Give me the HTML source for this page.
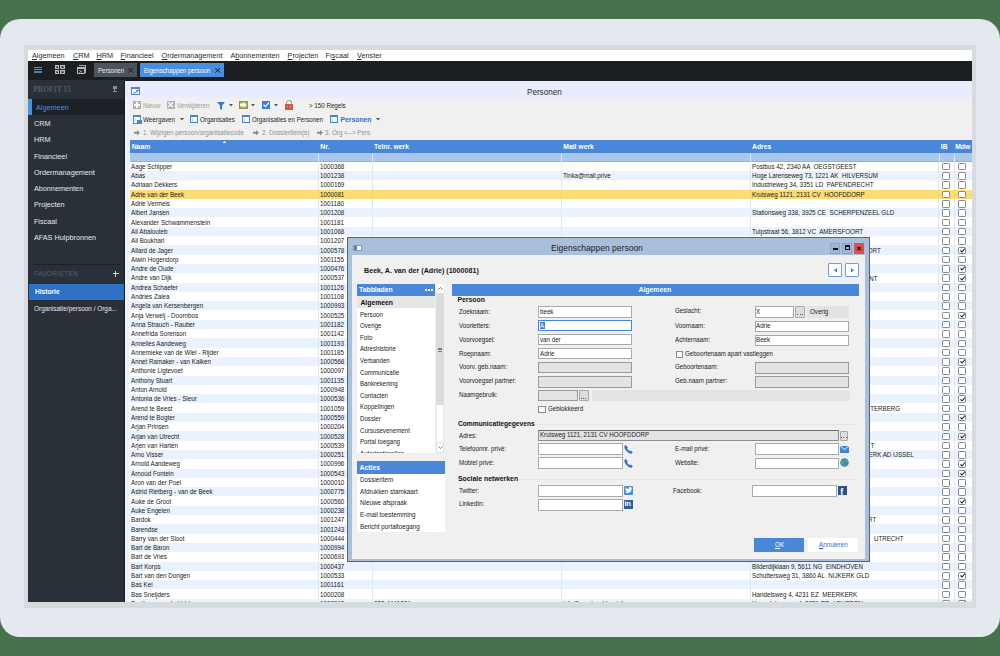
<!DOCTYPE html><html><head><meta charset="utf-8"><style>
html,body{margin:0;padding:0}
body{width:1000px;height:656px;position:relative;overflow:hidden;background:#48724e;font-family:"Liberation Sans",sans-serif}
div{position:absolute;box-sizing:border-box}
.t{white-space:pre;line-height:1.117}
</style></head><body><div style="left:0.00px;top:19.00px;width:1000.00px;height:618.00px;background:#e4e8ef;border-radius:20px"></div><div style="left:24.00px;top:45.00px;width:952.00px;height:562.60px;background:#d6dcdd"></div><div style="left:28.00px;top:50.00px;width:944.00px;height:552.00px;background:#f0f0f0"></div><div style="left:28.00px;top:50.00px;width:944.00px;height:11.00px;background:#ffffff"></div><div class="t" style="left:32.00px;top:51.65px;font-size:7.250px;color:#2a2a2a;font-weight:normal;font-family:'Liberation Sans', sans-serif;text-decoration-thickness:0.6px;text-underline-offset:0.8px"><u>A</u>lgemeen</div><div class="t" style="left:73.00px;top:51.65px;font-size:7.250px;color:#2a2a2a;font-weight:normal;font-family:'Liberation Sans', sans-serif;text-decoration-thickness:0.6px;text-underline-offset:0.8px"><u>C</u>RM</div><div class="t" style="left:96.40px;top:51.65px;font-size:7.250px;color:#2a2a2a;font-weight:normal;font-family:'Liberation Sans', sans-serif;text-decoration-thickness:0.6px;text-underline-offset:0.8px"><u>H</u>RM</div><div class="t" style="left:120.60px;top:51.65px;font-size:7.250px;color:#2a2a2a;font-weight:normal;font-family:'Liberation Sans', sans-serif;text-decoration-thickness:0.6px;text-underline-offset:0.8px"><u>F</u>inancieel</div><div class="t" style="left:161.60px;top:51.65px;font-size:7.250px;color:#2a2a2a;font-weight:normal;font-family:'Liberation Sans', sans-serif;text-decoration-thickness:0.6px;text-underline-offset:0.8px"><u>O</u>rdermanagement</div><div class="t" style="left:230.40px;top:51.65px;font-size:7.250px;color:#2a2a2a;font-weight:normal;font-family:'Liberation Sans', sans-serif;text-decoration-thickness:0.6px;text-underline-offset:0.8px">A<u>b</u>onnementen</div><div class="t" style="left:287.60px;top:51.65px;font-size:7.250px;color:#2a2a2a;font-weight:normal;font-family:'Liberation Sans', sans-serif;text-decoration-thickness:0.6px;text-underline-offset:0.8px"><u>P</u>rojecten</div><div class="t" style="left:325.60px;top:51.65px;font-size:7.250px;color:#2a2a2a;font-weight:normal;font-family:'Liberation Sans', sans-serif;text-decoration-thickness:0.6px;text-underline-offset:0.8px">Fi<u>s</u>caal</div><div class="t" style="left:357.00px;top:51.65px;font-size:7.250px;color:#2a2a2a;font-weight:normal;font-family:'Liberation Sans', sans-serif;text-decoration-thickness:0.6px;text-underline-offset:0.8px"><u>V</u>enster</div><div style="left:28.00px;top:61.00px;width:944.00px;height:19.60px;background:#1c1f22"></div><div style="left:34.00px;top:66.80px;width:8.40px;height:1.10px;background:#4a90e2"></div><div style="left:34.00px;top:69.10px;width:8.40px;height:1.20px;background:#4a90e2"></div><div style="left:34.00px;top:71.20px;width:8.40px;height:1.90px;background:#3f7fcf"></div><div style="left:55.00px;top:65.00px;width:4.30px;height:4.30px;border:1px solid #b9bcc0;background:#6a6d71"></div><div style="left:56.50px;top:66.50px;width:1.30px;height:1.30px;background:#101214"></div><div style="left:55.00px;top:70.20px;width:4.30px;height:4.30px;border:1px solid #b9bcc0;background:#6a6d71"></div><div style="left:56.50px;top:71.70px;width:1.30px;height:1.30px;background:#101214"></div><div style="left:60.30px;top:65.00px;width:4.30px;height:4.30px;border:1px solid #b9bcc0;background:#6a6d71"></div><div style="left:61.80px;top:66.50px;width:1.30px;height:1.30px;background:#101214"></div><div style="left:60.30px;top:70.20px;width:4.30px;height:4.30px;border:1px solid #b9bcc0;background:#6a6d71"></div><div style="left:61.80px;top:71.70px;width:1.30px;height:1.30px;background:#101214"></div><div style="left:78.80px;top:65.00px;width:7.50px;height:7.50px;border-top:1.1px solid #a9acb0;border-right:1.1px solid #a9acb0"></div><div style="left:76.80px;top:66.60px;width:8.50px;height:7.80px;border:1.1px solid #b5b8bc;border-top:2px solid #b5b8bc;background:#1c1f22"></div><svg style="position:absolute;left:79.3px;top:69.5px" width="3.6" height="3" viewBox="0 0 3.6 3"><path d="M0.2 0.2L3.4 2.8M3.4 0.2L0.2 2.8" stroke="#b5b8bc" stroke-width="0.8"/></svg><div style="left:93.90px;top:63.10px;width:43.20px;height:14.00px;background:#4d545c"></div><div class="t" style="left:97.80px;top:67.51px;font-size:7.137px;color:#e8eaec;font-weight:normal;font-family:'Liberation Sans', sans-serif;transform:scaleX(0.8547);transform-origin:0 0;">Personen</div><svg style="position:absolute;left:128.4px;top:68.2px" width="5.4" height="4.8" viewBox="0 0 5.4 4.8"><path d="M0.3 0.2L5.1 4.6M5.1 0.2L0.3 4.6" stroke="#151719" stroke-width="1"/></svg><div style="left:140.00px;top:63.40px;width:84.00px;height:13.60px;background:#4a8edf"></div><div class="t" style="left:144.40px;top:67.48px;font-size:7.184px;color:#ffffff;font-weight:normal;font-family:'Liberation Sans', sans-serif;transform:scaleX(0.8547);transform-origin:0 0;">Eigenschappen persoon</div><svg style="position:absolute;left:215px;top:68.2px" width="5.4" height="4.8" viewBox="0 0 5.4 4.8"><path d="M0.3 0.2L5.1 4.6M5.1 0.2L0.3 4.6" stroke="#151719" stroke-width="1"/></svg><div style="left:28.00px;top:80.00px;width:97.00px;height:522.00px;background:#2a3038"></div><div class="t" style="left:33.25px;top:86.20px;font-size:7.530px;color:#575d64;font-weight:bold;font-family:'Liberation Serif', serif;letter-spacing:0px">PROFIT 15</div><div style="left:114.30px;top:85.50px;width:1.20px;height:6.00px;background:#8a8f94"></div><div style="left:112.80px;top:85.50px;width:4.20px;height:3.60px;background:#8a8f94"></div><div style="left:113.20px;top:91.00px;width:3.40px;height:1.00px;background:#8a8f94"></div><div style="left:28.00px;top:98.60px;width:97.00px;height:16.30px;background:#1d2125"></div><div style="left:28.40px;top:98.60px;width:3.60px;height:16.30px;background:#4a90e2"></div><div class="t" style="left:36.00px;top:103.64px;font-size:7.270px;color:#4a90e2;font-weight:normal;font-family:'Liberation Sans', sans-serif;">Algemeen</div><div class="t" style="left:33.90px;top:120.14px;font-size:7.270px;color:#e6e8ea;font-weight:normal;font-family:'Liberation Sans', sans-serif;">CRM</div><div class="t" style="left:33.90px;top:136.39px;font-size:7.270px;color:#e6e8ea;font-weight:normal;font-family:'Liberation Sans', sans-serif;">HRM</div><div class="t" style="left:33.90px;top:152.64px;font-size:7.270px;color:#e6e8ea;font-weight:normal;font-family:'Liberation Sans', sans-serif;">Financieel</div><div class="t" style="left:33.90px;top:168.89px;font-size:7.270px;color:#e6e8ea;font-weight:normal;font-family:'Liberation Sans', sans-serif;">Ordermanagement</div><div class="t" style="left:33.90px;top:185.14px;font-size:7.270px;color:#e6e8ea;font-weight:normal;font-family:'Liberation Sans', sans-serif;">Abonnementen</div><div class="t" style="left:33.90px;top:201.39px;font-size:7.270px;color:#e6e8ea;font-weight:normal;font-family:'Liberation Sans', sans-serif;">Projecten</div><div class="t" style="left:33.90px;top:217.64px;font-size:7.270px;color:#e6e8ea;font-weight:normal;font-family:'Liberation Sans', sans-serif;">Fiscaal</div><div class="t" style="left:33.90px;top:233.89px;font-size:7.270px;color:#e6e8ea;font-weight:normal;font-family:'Liberation Sans', sans-serif;">AFAS Hulpbronnen</div><div style="left:33.00px;top:264.00px;width:87.00px;height:1.00px;background:#1d2125"></div><div class="t" style="left:33.50px;top:270.19px;font-size:7.722px;color:#596067;font-weight:normal;font-family:'Liberation Sans', sans-serif;transform:scaleX(0.8547);transform-origin:0 0;letter-spacing:0.35px">FAVORIETEN</div><div style="left:112.80px;top:273.10px;width:6.00px;height:1.10px;background:#d0d3d6"></div><div style="left:115.25px;top:270.60px;width:1.10px;height:6.00px;background:#d0d3d6"></div><div style="left:29.00px;top:283.70px;width:94.70px;height:16.10px;background:#2f70c4"></div><div class="t" style="left:35.00px;top:288.20px;font-size:6.600px;color:#ffffff;font-weight:bold;font-family:'Liberation Sans', sans-serif;">Historie</div><div class="t" style="left:33.90px;top:304.69px;font-size:7.535px;color:#e6e8ea;font-weight:normal;font-family:'Liberation Sans', sans-serif;transform:scaleX(0.8547);transform-origin:0 0;">Organisatie/persoon / Orga...</div><div style="left:124.20px;top:80.00px;width:1.00px;height:522.00px;background:#1a1d20"></div><div style="left:125.20px;top:80.60px;width:846.80px;height:521.40px;background:#f0f0f0"></div><div style="left:125.20px;top:80.60px;width:846.80px;height:17.20px;background:#e7edfc"></div><div style="left:125.20px;top:97.80px;width:4.40px;height:504.00px;background:#eef2fb"></div><div style="left:131.00px;top:87.10px;width:8.90px;height:7.80px;border:1px solid #4a86d0;border-top:2px solid #4a86d0;background:#f6f8fc"></div><div style="left:133.00px;top:91.80px;width:5.00px;height:1.20px;background:#3c7ad0;transform:rotate(-20deg)"></div><div style="left:135.50px;top:90.20px;width:3.00px;height:1.20px;background:#e03b3b;transform:rotate(-20deg)"></div><div class="t" style="left:527.10px;top:86.66px;font-size:9.072px;color:#2b2b2b;font-weight:normal;font-family:'Liberation Sans', sans-serif;transform:scaleX(0.8929);transform-origin:0 0;">Personen</div><div style="left:133.10px;top:101.00px;width:7.80px;height:7.90px;background:#b3b3b3"></div><div style="left:136.40px;top:102.30px;width:1.30px;height:5.30px;background:#ffffff"></div><div style="left:134.40px;top:104.30px;width:5.30px;height:1.30px;background:#ffffff"></div><div class="t" style="left:142.90px;top:102.25px;font-size:7.254px;color:#9a9a9a;font-weight:normal;font-family:'Liberation Sans', sans-serif;transform:scaleX(0.8547);transform-origin:0 0;">Nieuw</div><div style="left:167.00px;top:101.00px;width:7.80px;height:7.90px;background:#b3b3b3"></div><svg style="position:absolute;left:168.2px;top:102.2px" width="5.4" height="5.4" viewBox="0 0 5.4 5.4"><path d="M0.3 0.3L5.1 5.1M5.1 0.3L0.3 5.1" stroke="#ffffff" stroke-width="1.3"/></svg><div class="t" style="left:176.70px;top:102.25px;font-size:7.254px;color:#9a9a9a;font-weight:normal;font-family:'Liberation Sans', sans-serif;transform:scaleX(0.8547);transform-origin:0 0;">Verwijderen</div><svg style="position:absolute;left:216.5px;top:101.5px" width="8" height="8" viewBox="0 0 8 8"><path d="M0 0H8L5 3.6V8L3 6.8V3.6Z" fill="#2f78d4"/></svg><svg style="position:absolute;left:228.50px;top:104.40px" width="4" height="3" viewBox="0 0 4 3"><path d="M0 0H4L2 2.4Z" fill="#555"/></svg><div style="left:238.80px;top:101.00px;width:9.30px;height:8.30px;background:#93bf55;border:0.8px solid #a08a50"></div><svg style="position:absolute;left:240.2px;top:102.3px" width="6.8" height="5.8" viewBox="0 0 6.8 5.8"><path d="M0 1.6H3.4V0L6.8 2.9L3.4 5.8V4.2H0Z" fill="#ffffff"/></svg><svg style="position:absolute;left:251.00px;top:104.40px" width="4" height="3" viewBox="0 0 4 3"><path d="M0 0H4L2 2.4Z" fill="#555"/></svg><div style="left:261.70px;top:101.00px;width:8.60px;height:8.20px;background:#3a7fd6"></div><svg style="position:absolute;left:262.8px;top:102.2px" width="6.5" height="5.5" viewBox="0 0 6.5 5.5"><path d="M0.6 2.8L2.5 4.6L6 0.6" stroke="#ffffff" stroke-width="1.3" fill="none"/></svg><svg style="position:absolute;left:273.50px;top:104.40px" width="4" height="3" viewBox="0 0 4 3"><path d="M0 0H4L2 2.4Z" fill="#555"/></svg><div style="left:285.70px;top:100.20px;width:6.40px;height:6.00px;border:1.5px solid #a5a5a5;border-bottom:none;border-radius:3.2px 3.2px 0 0"></div><div style="left:284.60px;top:104.20px;width:8.50px;height:5.60px;background:#d9534a"></div><div style="left:287.20px;top:106.20px;width:0.90px;height:0.90px;background:#f0c0a0"></div><div style="left:289.80px;top:106.20px;width:0.90px;height:0.90px;background:#f0c0a0"></div><div class="t" style="left:309.00px;top:102.25px;font-size:7.254px;color:#1e1e1e;font-weight:normal;font-family:'Liberation Sans', sans-serif;transform:scaleX(0.8547);transform-origin:0 0;">&gt; 150 Regels</div><div style="left:133.10px;top:115.00px;width:8.40px;height:8.50px;border:1px solid #4a86d0;border-top:2px solid #4a86d0;background:#f8fafd"></div><div style="left:134.60px;top:118.00px;width:1.40px;height:4.20px;background:#c9d9ee"></div><div style="left:137.30px;top:119.80px;width:4.60px;height:3.90px;background:#4a86d0"></div><div class="t" style="left:142.90px;top:115.98px;font-size:7.371px;color:#1e1e1e;font-weight:normal;font-family:'Liberation Sans', sans-serif;transform:scaleX(0.8547);transform-origin:0 0;">Weergaven</div><svg style="position:absolute;left:180.00px;top:118.00px" width="4" height="3" viewBox="0 0 4 3"><path d="M0 0H4L2 2.4Z" fill="#555"/></svg><div style="left:190.00px;top:114.80px;width:8.40px;height:8.50px;border:1px solid #4a86d0;border-top:2px solid #4a86d0;background:#f8fafd"></div><div style="left:191.50px;top:117.80px;width:1.40px;height:4.20px;background:#c9d9ee"></div><div class="t" style="left:200.00px;top:116.05px;font-size:7.254px;color:#1e1e1e;font-weight:normal;font-family:'Liberation Sans', sans-serif;transform:scaleX(0.8547);transform-origin:0 0;">Organisaties</div><div style="left:242.00px;top:114.80px;width:8.40px;height:8.50px;border:1px solid #4a86d0;border-top:2px solid #4a86d0;background:#f8fafd"></div><div style="left:243.50px;top:117.80px;width:1.40px;height:4.20px;background:#c9d9ee"></div><div class="t" style="left:252.00px;top:116.08px;font-size:7.184px;color:#1e1e1e;font-weight:normal;font-family:'Liberation Sans', sans-serif;transform:scaleX(0.8547);transform-origin:0 0;">Organisaties en Personen</div><div style="left:330.00px;top:114.80px;width:8.40px;height:8.50px;border:1px solid #4a86d0;border-top:2px solid #4a86d0;background:#f8fafd"></div><div style="left:331.50px;top:117.80px;width:1.40px;height:4.20px;background:#c9d9ee"></div><div class="t" style="left:340.50px;top:115.89px;font-size:6.800px;color:#2f6fc4;font-weight:bold;font-family:'Liberation Sans', sans-serif;">Personen</div><svg style="position:absolute;left:375.50px;top:118.00px" width="4" height="3" viewBox="0 0 4 3"><path d="M0 0H4L2 2.4Z" fill="#555"/></svg><svg style="position:absolute;left:134.00px;top:130.10px" width="6" height="5.6" viewBox="0 0 6 5.6"><path d="M0 1.8H3V0L6 2.8L3 5.6V3.8H0Z" fill="#8c8c8c"/></svg><div class="t" style="left:143.40px;top:129.01px;font-size:7.324px;color:#8e8e8e;font-weight:normal;font-family:'Liberation Sans', sans-serif;transform:scaleX(0.8547);transform-origin:0 0;">1. Wijzigen persoon/organisatiecode</div><svg style="position:absolute;left:252.60px;top:130.10px" width="6" height="5.6" viewBox="0 0 6 5.6"><path d="M0 1.8H3V0L6 2.8L3 5.6V3.8H0Z" fill="#8c8c8c"/></svg><div class="t" style="left:261.70px;top:129.01px;font-size:7.324px;color:#8e8e8e;font-weight:normal;font-family:'Liberation Sans', sans-serif;transform:scaleX(0.8547);transform-origin:0 0;">2. Dossieritem(s)</div><svg style="position:absolute;left:316.80px;top:130.10px" width="6" height="5.6" viewBox="0 0 6 5.6"><path d="M0 1.8H3V0L6 2.8L3 5.6V3.8H0Z" fill="#8c8c8c"/></svg><div class="t" style="left:325.40px;top:129.01px;font-size:7.324px;color:#8e8e8e;font-weight:normal;font-family:'Liberation Sans', sans-serif;transform:scaleX(0.8547);transform-origin:0 0;">3. Org &lt;--&gt; Pers</div><div style="left:129.60px;top:140.00px;width:842.50px;height:12.80px;background:#4a87d8"></div><div style="left:129.60px;top:152.80px;width:842.50px;height:8.90px;background:#a9c6ec;border-bottom:1px solid #8fb2e0"></div><div class="t" style="left:131.70px;top:142.79px;font-size:6.800px;color:#ffffff;font-weight:bold;font-family:'Liberation Sans', sans-serif;">Naam</div><div class="t" style="left:320.30px;top:142.79px;font-size:6.800px;color:#ffffff;font-weight:bold;font-family:'Liberation Sans', sans-serif;">Nr.</div><div class="t" style="left:374.00px;top:142.79px;font-size:6.800px;color:#ffffff;font-weight:bold;font-family:'Liberation Sans', sans-serif;">Telnr. werk</div><div class="t" style="left:563.25px;top:142.79px;font-size:6.800px;color:#ffffff;font-weight:bold;font-family:'Liberation Sans', sans-serif;">Mail werk</div><div class="t" style="left:752.00px;top:142.79px;font-size:6.800px;color:#ffffff;font-weight:bold;font-family:'Liberation Sans', sans-serif;">Adres</div><div class="t" style="left:940.80px;top:142.79px;font-size:6.800px;color:#ffffff;font-weight:bold;font-family:'Liberation Sans', sans-serif;">IB</div><div class="t" style="left:955.20px;top:142.79px;font-size:6.800px;color:#ffffff;font-weight:bold;font-family:'Liberation Sans', sans-serif;">Mdw</div><svg style="position:absolute;left:221.5px;top:140.6px" width="5" height="2.6" viewBox="0 0 5 2.6"><path d="M0 2.6H5L2.5 0Z" fill="#ffffff"/></svg><div style="left:318.40px;top:153.50px;width:1.00px;height:8.00px;background:#d8e6f8"></div><div style="left:372.20px;top:153.50px;width:1.00px;height:8.00px;background:#d8e6f8"></div><div style="left:561.00px;top:153.50px;width:1.00px;height:8.00px;background:#d8e6f8"></div><div style="left:750.00px;top:153.50px;width:1.00px;height:8.00px;background:#d8e6f8"></div><div style="left:938.50px;top:153.50px;width:1.00px;height:8.00px;background:#d8e6f8"></div><div style="left:953.60px;top:153.50px;width:1.00px;height:8.00px;background:#d8e6f8"></div><div style="left:129.6px;top:161.7px;width:842.50px;height:440.00px;overflow:hidden"><div style="left:0.00px;top:0.00px;width:842.50px;height:9.60px;background:#ffffff"></div><div style="left:188.80px;top:0.00px;width:1.00px;height:9.60px;background:#dce9f7"></div><div style="left:242.60px;top:0.00px;width:1.00px;height:9.60px;background:#dce9f7"></div><div style="left:431.40px;top:0.00px;width:1.00px;height:9.60px;background:#dce9f7"></div><div style="left:620.40px;top:0.00px;width:1.00px;height:9.60px;background:#dce9f7"></div><div style="left:808.90px;top:0.00px;width:1.00px;height:9.60px;background:#dce9f7"></div><div style="left:824.00px;top:0.00px;width:1.00px;height:9.60px;background:#dce9f7"></div><div class="t" style="left:1.60px;top:1.21px;font-size:7.500px;color:#1a1a1a;font-weight:normal;font-family:'Liberation Sans', sans-serif;transform:scaleX(0.8333);transform-origin:0 0;">Aage Schipper</div><div class="t" style="left:190.90px;top:1.21px;font-size:7.500px;color:#1a1a1a;font-weight:normal;font-family:'Liberation Sans', sans-serif;transform:scaleX(0.8333);transform-origin:0 0;">1000368</div><div class="t" style="left:622.40px;top:1.21px;font-size:7.500px;color:#1a1a1a;font-weight:normal;font-family:'Liberation Sans', sans-serif;transform:scaleX(0.8333);transform-origin:0 0;">Postbus 42, 2340 AA  OEGSTGEEST</div><div style="left:812.30px;top:1.20px;width:7.80px;height:7.50px;border:1px solid #8a8a8a;border-radius:1.2px;background:#ffffff"></div><div style="left:828.90px;top:1.20px;width:7.80px;height:7.50px;border:1px solid #8a8a8a;border-radius:1.2px;background:#ffffff"></div><div style="left:0.00px;top:9.30px;width:842.50px;height:9.60px;background:#eaf3fd"></div><div style="left:188.80px;top:9.30px;width:1.00px;height:9.60px;background:#dce9f7"></div><div style="left:242.60px;top:9.30px;width:1.00px;height:9.60px;background:#dce9f7"></div><div style="left:431.40px;top:9.30px;width:1.00px;height:9.60px;background:#dce9f7"></div><div style="left:620.40px;top:9.30px;width:1.00px;height:9.60px;background:#dce9f7"></div><div style="left:808.90px;top:9.30px;width:1.00px;height:9.60px;background:#dce9f7"></div><div style="left:824.00px;top:9.30px;width:1.00px;height:9.60px;background:#dce9f7"></div><div class="t" style="left:1.60px;top:10.51px;font-size:7.500px;color:#1a1a1a;font-weight:normal;font-family:'Liberation Sans', sans-serif;transform:scaleX(0.8333);transform-origin:0 0;">Abas</div><div class="t" style="left:190.90px;top:10.51px;font-size:7.500px;color:#1a1a1a;font-weight:normal;font-family:'Liberation Sans', sans-serif;transform:scaleX(0.8333);transform-origin:0 0;">1001238</div><div class="t" style="left:622.40px;top:10.51px;font-size:7.500px;color:#1a1a1a;font-weight:normal;font-family:'Liberation Sans', sans-serif;transform:scaleX(0.8333);transform-origin:0 0;">Hoge Larenseweg 73, 1221 AK  HILVERSUM</div><div class="t" style="left:433.50px;top:10.55px;font-size:7.440px;color:#1a1a1a;font-weight:normal;font-family:'Liberation Sans', sans-serif;transform:scaleX(0.8333);transform-origin:0 0;">Tinka@mail.prive</div><div style="left:812.30px;top:10.50px;width:7.80px;height:7.50px;border:1px solid #8a8a8a;border-radius:1.2px;background:#ffffff"></div><div style="left:828.90px;top:10.50px;width:7.80px;height:7.50px;border:1px solid #8a8a8a;border-radius:1.2px;background:#ffffff"></div><div style="left:0.00px;top:18.60px;width:842.50px;height:9.60px;background:#ffffff"></div><div style="left:188.80px;top:18.60px;width:1.00px;height:9.60px;background:#dce9f7"></div><div style="left:242.60px;top:18.60px;width:1.00px;height:9.60px;background:#dce9f7"></div><div style="left:431.40px;top:18.60px;width:1.00px;height:9.60px;background:#dce9f7"></div><div style="left:620.40px;top:18.60px;width:1.00px;height:9.60px;background:#dce9f7"></div><div style="left:808.90px;top:18.60px;width:1.00px;height:9.60px;background:#dce9f7"></div><div style="left:824.00px;top:18.60px;width:1.00px;height:9.60px;background:#dce9f7"></div><div class="t" style="left:1.60px;top:19.81px;font-size:7.500px;color:#1a1a1a;font-weight:normal;font-family:'Liberation Sans', sans-serif;transform:scaleX(0.8333);transform-origin:0 0;">Adriaan Dekkers</div><div class="t" style="left:190.90px;top:19.81px;font-size:7.500px;color:#1a1a1a;font-weight:normal;font-family:'Liberation Sans', sans-serif;transform:scaleX(0.8333);transform-origin:0 0;">1000169</div><div class="t" style="left:622.40px;top:19.81px;font-size:7.500px;color:#1a1a1a;font-weight:normal;font-family:'Liberation Sans', sans-serif;transform:scaleX(0.8333);transform-origin:0 0;">Industrieweg 34, 3351 LD  PAPENDRECHT</div><div style="left:812.30px;top:19.80px;width:7.80px;height:7.50px;border:1px solid #8a8a8a;border-radius:1.2px;background:#ffffff"></div><div style="left:828.90px;top:19.80px;width:7.80px;height:7.50px;border:1px solid #8a8a8a;border-radius:1.2px;background:#ffffff"></div><div style="left:0.00px;top:27.90px;width:842.50px;height:9.60px;background:#fddc76"></div><div style="left:188.80px;top:27.90px;width:1.00px;height:9.60px;background:#f3d27a"></div><div style="left:242.60px;top:27.90px;width:1.00px;height:9.60px;background:#f3d27a"></div><div style="left:431.40px;top:27.90px;width:1.00px;height:9.60px;background:#f3d27a"></div><div style="left:620.40px;top:27.90px;width:1.00px;height:9.60px;background:#f3d27a"></div><div style="left:808.90px;top:27.90px;width:1.00px;height:9.60px;background:#f3d27a"></div><div style="left:824.00px;top:27.90px;width:1.00px;height:9.60px;background:#f3d27a"></div><div class="t" style="left:1.60px;top:29.11px;font-size:7.500px;color:#1a1a1a;font-weight:normal;font-family:'Liberation Sans', sans-serif;transform:scaleX(0.8333);transform-origin:0 0;">Adrie van der Beek</div><div class="t" style="left:190.90px;top:29.11px;font-size:7.500px;color:#1a1a1a;font-weight:normal;font-family:'Liberation Sans', sans-serif;transform:scaleX(0.8333);transform-origin:0 0;">1000081</div><div class="t" style="left:622.40px;top:29.11px;font-size:7.500px;color:#1a1a1a;font-weight:normal;font-family:'Liberation Sans', sans-serif;transform:scaleX(0.8333);transform-origin:0 0;">Kruisweg 1121, 2131 CV  HOOFDDORP</div><div style="left:812.30px;top:29.10px;width:7.80px;height:7.50px;border:1px solid #8a8a8a;border-radius:1.2px;background:#ffffff"></div><div style="left:828.90px;top:29.10px;width:7.80px;height:7.50px;border:1px solid #8a8a8a;border-radius:1.2px;background:#ffffff"></div><div style="left:0.00px;top:37.20px;width:842.50px;height:9.60px;background:#ffffff"></div><div style="left:188.80px;top:37.20px;width:1.00px;height:9.60px;background:#dce9f7"></div><div style="left:242.60px;top:37.20px;width:1.00px;height:9.60px;background:#dce9f7"></div><div style="left:431.40px;top:37.20px;width:1.00px;height:9.60px;background:#dce9f7"></div><div style="left:620.40px;top:37.20px;width:1.00px;height:9.60px;background:#dce9f7"></div><div style="left:808.90px;top:37.20px;width:1.00px;height:9.60px;background:#dce9f7"></div><div style="left:824.00px;top:37.20px;width:1.00px;height:9.60px;background:#dce9f7"></div><div class="t" style="left:1.60px;top:38.41px;font-size:7.500px;color:#1a1a1a;font-weight:normal;font-family:'Liberation Sans', sans-serif;transform:scaleX(0.8333);transform-origin:0 0;">Adrie Vermeis</div><div class="t" style="left:190.90px;top:38.41px;font-size:7.500px;color:#1a1a1a;font-weight:normal;font-family:'Liberation Sans', sans-serif;transform:scaleX(0.8333);transform-origin:0 0;">1001180</div><div style="left:812.30px;top:38.40px;width:7.80px;height:7.50px;border:1px solid #8a8a8a;border-radius:1.2px;background:#ffffff"></div><div style="left:828.90px;top:38.40px;width:7.80px;height:7.50px;border:1px solid #8a8a8a;border-radius:1.2px;background:#ffffff"></div><div style="left:0.00px;top:46.50px;width:842.50px;height:9.60px;background:#eaf3fd"></div><div style="left:188.80px;top:46.50px;width:1.00px;height:9.60px;background:#dce9f7"></div><div style="left:242.60px;top:46.50px;width:1.00px;height:9.60px;background:#dce9f7"></div><div style="left:431.40px;top:46.50px;width:1.00px;height:9.60px;background:#dce9f7"></div><div style="left:620.40px;top:46.50px;width:1.00px;height:9.60px;background:#dce9f7"></div><div style="left:808.90px;top:46.50px;width:1.00px;height:9.60px;background:#dce9f7"></div><div style="left:824.00px;top:46.50px;width:1.00px;height:9.60px;background:#dce9f7"></div><div class="t" style="left:1.60px;top:47.71px;font-size:7.500px;color:#1a1a1a;font-weight:normal;font-family:'Liberation Sans', sans-serif;transform:scaleX(0.8333);transform-origin:0 0;">Albert Jansen</div><div class="t" style="left:190.90px;top:47.71px;font-size:7.500px;color:#1a1a1a;font-weight:normal;font-family:'Liberation Sans', sans-serif;transform:scaleX(0.8333);transform-origin:0 0;">1001208</div><div class="t" style="left:622.40px;top:47.71px;font-size:7.500px;color:#1a1a1a;font-weight:normal;font-family:'Liberation Sans', sans-serif;transform:scaleX(0.8333);transform-origin:0 0;">Stationsweg 338, 3925 CE  SCHERPENZEEL GLD</div><div style="left:812.30px;top:47.70px;width:7.80px;height:7.50px;border:1px solid #8a8a8a;border-radius:1.2px;background:#ffffff"></div><div style="left:828.90px;top:47.70px;width:7.80px;height:7.50px;border:1px solid #8a8a8a;border-radius:1.2px;background:#ffffff"></div><div style="left:0.00px;top:55.80px;width:842.50px;height:9.60px;background:#ffffff"></div><div style="left:188.80px;top:55.80px;width:1.00px;height:9.60px;background:#dce9f7"></div><div style="left:242.60px;top:55.80px;width:1.00px;height:9.60px;background:#dce9f7"></div><div style="left:431.40px;top:55.80px;width:1.00px;height:9.60px;background:#dce9f7"></div><div style="left:620.40px;top:55.80px;width:1.00px;height:9.60px;background:#dce9f7"></div><div style="left:808.90px;top:55.80px;width:1.00px;height:9.60px;background:#dce9f7"></div><div style="left:824.00px;top:55.80px;width:1.00px;height:9.60px;background:#dce9f7"></div><div class="t" style="left:1.60px;top:57.01px;font-size:7.500px;color:#1a1a1a;font-weight:normal;font-family:'Liberation Sans', sans-serif;transform:scaleX(0.8333);transform-origin:0 0;">Alexander Schwammenstein</div><div class="t" style="left:190.90px;top:57.01px;font-size:7.500px;color:#1a1a1a;font-weight:normal;font-family:'Liberation Sans', sans-serif;transform:scaleX(0.8333);transform-origin:0 0;">1001181</div><div style="left:812.30px;top:57.00px;width:7.80px;height:7.50px;border:1px solid #8a8a8a;border-radius:1.2px;background:#ffffff"></div><div style="left:828.90px;top:57.00px;width:7.80px;height:7.50px;border:1px solid #8a8a8a;border-radius:1.2px;background:#ffffff"></div><div style="left:0.00px;top:65.10px;width:842.50px;height:9.60px;background:#eaf3fd"></div><div style="left:188.80px;top:65.10px;width:1.00px;height:9.60px;background:#dce9f7"></div><div style="left:242.60px;top:65.10px;width:1.00px;height:9.60px;background:#dce9f7"></div><div style="left:431.40px;top:65.10px;width:1.00px;height:9.60px;background:#dce9f7"></div><div style="left:620.40px;top:65.10px;width:1.00px;height:9.60px;background:#dce9f7"></div><div style="left:808.90px;top:65.10px;width:1.00px;height:9.60px;background:#dce9f7"></div><div style="left:824.00px;top:65.10px;width:1.00px;height:9.60px;background:#dce9f7"></div><div class="t" style="left:1.60px;top:66.31px;font-size:7.500px;color:#1a1a1a;font-weight:normal;font-family:'Liberation Sans', sans-serif;transform:scaleX(0.8333);transform-origin:0 0;">Ali Abalouteb</div><div class="t" style="left:190.90px;top:66.31px;font-size:7.500px;color:#1a1a1a;font-weight:normal;font-family:'Liberation Sans', sans-serif;transform:scaleX(0.8333);transform-origin:0 0;">1001068</div><div class="t" style="left:622.40px;top:66.31px;font-size:7.500px;color:#1a1a1a;font-weight:normal;font-family:'Liberation Sans', sans-serif;transform:scaleX(0.8333);transform-origin:0 0;">Tulpstraat 56, 3812 VC  AMERSFOORT</div><div style="left:812.30px;top:66.30px;width:7.80px;height:7.50px;border:1px solid #8a8a8a;border-radius:1.2px;background:#ffffff"></div><div style="left:828.90px;top:66.30px;width:7.80px;height:7.50px;border:1px solid #8a8a8a;border-radius:1.2px;background:#ffffff"></div><div style="left:0.00px;top:74.40px;width:842.50px;height:9.60px;background:#ffffff"></div><div style="left:188.80px;top:74.40px;width:1.00px;height:9.60px;background:#dce9f7"></div><div style="left:242.60px;top:74.40px;width:1.00px;height:9.60px;background:#dce9f7"></div><div style="left:431.40px;top:74.40px;width:1.00px;height:9.60px;background:#dce9f7"></div><div style="left:620.40px;top:74.40px;width:1.00px;height:9.60px;background:#dce9f7"></div><div style="left:808.90px;top:74.40px;width:1.00px;height:9.60px;background:#dce9f7"></div><div style="left:824.00px;top:74.40px;width:1.00px;height:9.60px;background:#dce9f7"></div><div class="t" style="left:1.60px;top:75.61px;font-size:7.500px;color:#1a1a1a;font-weight:normal;font-family:'Liberation Sans', sans-serif;transform:scaleX(0.8333);transform-origin:0 0;">Ali Boukhari</div><div class="t" style="left:190.90px;top:75.61px;font-size:7.500px;color:#1a1a1a;font-weight:normal;font-family:'Liberation Sans', sans-serif;transform:scaleX(0.8333);transform-origin:0 0;">1001207</div><div style="left:812.30px;top:75.60px;width:7.80px;height:7.50px;border:1px solid #8a8a8a;border-radius:1.2px;background:#ffffff"></div><div style="left:828.90px;top:75.60px;width:7.80px;height:7.50px;border:1px solid #8a8a8a;border-radius:1.2px;background:#ffffff"></div><div style="left:0.00px;top:83.70px;width:842.50px;height:9.60px;background:#eaf3fd"></div><div style="left:188.80px;top:83.70px;width:1.00px;height:9.60px;background:#dce9f7"></div><div style="left:242.60px;top:83.70px;width:1.00px;height:9.60px;background:#dce9f7"></div><div style="left:431.40px;top:83.70px;width:1.00px;height:9.60px;background:#dce9f7"></div><div style="left:620.40px;top:83.70px;width:1.00px;height:9.60px;background:#dce9f7"></div><div style="left:808.90px;top:83.70px;width:1.00px;height:9.60px;background:#dce9f7"></div><div style="left:824.00px;top:83.70px;width:1.00px;height:9.60px;background:#dce9f7"></div><div class="t" style="left:1.60px;top:84.91px;font-size:7.500px;color:#1a1a1a;font-weight:normal;font-family:'Liberation Sans', sans-serif;transform:scaleX(0.8333);transform-origin:0 0;">Allard de Jager</div><div class="t" style="left:190.90px;top:84.91px;font-size:7.500px;color:#1a1a1a;font-weight:normal;font-family:'Liberation Sans', sans-serif;transform:scaleX(0.8333);transform-origin:0 0;">1000578</div><div style="left:812.30px;top:84.90px;width:7.80px;height:7.50px;border:1px solid #8a8a8a;border-radius:1.2px;background:#ffffff"></div><div style="left:828.90px;top:84.90px;width:7.80px;height:7.50px;border:1px solid #8a8a8a;border-radius:1.2px;background:#ffffff"></div><svg style="position:absolute;left:830.20px;top:86.20px" width="5.4" height="4.8" viewBox="0 0 5.4 4.8"><path d="M0.5 2.4L2 4L5 0.5" stroke="#1a1a1a" stroke-width="1.1" fill="none"/></svg><div style="left:0.00px;top:93.00px;width:842.50px;height:9.60px;background:#ffffff"></div><div style="left:188.80px;top:93.00px;width:1.00px;height:9.60px;background:#dce9f7"></div><div style="left:242.60px;top:93.00px;width:1.00px;height:9.60px;background:#dce9f7"></div><div style="left:431.40px;top:93.00px;width:1.00px;height:9.60px;background:#dce9f7"></div><div style="left:620.40px;top:93.00px;width:1.00px;height:9.60px;background:#dce9f7"></div><div style="left:808.90px;top:93.00px;width:1.00px;height:9.60px;background:#dce9f7"></div><div style="left:824.00px;top:93.00px;width:1.00px;height:9.60px;background:#dce9f7"></div><div class="t" style="left:1.60px;top:94.21px;font-size:7.500px;color:#1a1a1a;font-weight:normal;font-family:'Liberation Sans', sans-serif;transform:scaleX(0.8333);transform-origin:0 0;">Alwin Hogendorp</div><div class="t" style="left:190.90px;top:94.21px;font-size:7.500px;color:#1a1a1a;font-weight:normal;font-family:'Liberation Sans', sans-serif;transform:scaleX(0.8333);transform-origin:0 0;">1001155</div><div style="left:812.30px;top:94.20px;width:7.80px;height:7.50px;border:1px solid #8a8a8a;border-radius:1.2px;background:#ffffff"></div><div style="left:828.90px;top:94.20px;width:7.80px;height:7.50px;border:1px solid #8a8a8a;border-radius:1.2px;background:#ffffff"></div><div style="left:0.00px;top:102.30px;width:842.50px;height:9.60px;background:#eaf3fd"></div><div style="left:188.80px;top:102.30px;width:1.00px;height:9.60px;background:#dce9f7"></div><div style="left:242.60px;top:102.30px;width:1.00px;height:9.60px;background:#dce9f7"></div><div style="left:431.40px;top:102.30px;width:1.00px;height:9.60px;background:#dce9f7"></div><div style="left:620.40px;top:102.30px;width:1.00px;height:9.60px;background:#dce9f7"></div><div style="left:808.90px;top:102.30px;width:1.00px;height:9.60px;background:#dce9f7"></div><div style="left:824.00px;top:102.30px;width:1.00px;height:9.60px;background:#dce9f7"></div><div class="t" style="left:1.60px;top:103.51px;font-size:7.500px;color:#1a1a1a;font-weight:normal;font-family:'Liberation Sans', sans-serif;transform:scaleX(0.8333);transform-origin:0 0;">Andre de Oude</div><div class="t" style="left:190.90px;top:103.51px;font-size:7.500px;color:#1a1a1a;font-weight:normal;font-family:'Liberation Sans', sans-serif;transform:scaleX(0.8333);transform-origin:0 0;">1000476</div><div style="left:812.30px;top:103.50px;width:7.80px;height:7.50px;border:1px solid #8a8a8a;border-radius:1.2px;background:#ffffff"></div><div style="left:828.90px;top:103.50px;width:7.80px;height:7.50px;border:1px solid #8a8a8a;border-radius:1.2px;background:#ffffff"></div><svg style="position:absolute;left:830.20px;top:104.80px" width="5.4" height="4.8" viewBox="0 0 5.4 4.8"><path d="M0.5 2.4L2 4L5 0.5" stroke="#1a1a1a" stroke-width="1.1" fill="none"/></svg><div style="left:0.00px;top:111.60px;width:842.50px;height:9.60px;background:#ffffff"></div><div style="left:188.80px;top:111.60px;width:1.00px;height:9.60px;background:#dce9f7"></div><div style="left:242.60px;top:111.60px;width:1.00px;height:9.60px;background:#dce9f7"></div><div style="left:431.40px;top:111.60px;width:1.00px;height:9.60px;background:#dce9f7"></div><div style="left:620.40px;top:111.60px;width:1.00px;height:9.60px;background:#dce9f7"></div><div style="left:808.90px;top:111.60px;width:1.00px;height:9.60px;background:#dce9f7"></div><div style="left:824.00px;top:111.60px;width:1.00px;height:9.60px;background:#dce9f7"></div><div class="t" style="left:1.60px;top:112.81px;font-size:7.500px;color:#1a1a1a;font-weight:normal;font-family:'Liberation Sans', sans-serif;transform:scaleX(0.8333);transform-origin:0 0;">Andre van Dijk</div><div class="t" style="left:190.90px;top:112.81px;font-size:7.500px;color:#1a1a1a;font-weight:normal;font-family:'Liberation Sans', sans-serif;transform:scaleX(0.8333);transform-origin:0 0;">1000537</div><div style="left:812.30px;top:112.80px;width:7.80px;height:7.50px;border:1px solid #8a8a8a;border-radius:1.2px;background:#ffffff"></div><div style="left:828.90px;top:112.80px;width:7.80px;height:7.50px;border:1px solid #8a8a8a;border-radius:1.2px;background:#ffffff"></div><svg style="position:absolute;left:830.20px;top:114.10px" width="5.4" height="4.8" viewBox="0 0 5.4 4.8"><path d="M0.5 2.4L2 4L5 0.5" stroke="#1a1a1a" stroke-width="1.1" fill="none"/></svg><div style="left:0.00px;top:120.90px;width:842.50px;height:9.60px;background:#eaf3fd"></div><div style="left:188.80px;top:120.90px;width:1.00px;height:9.60px;background:#dce9f7"></div><div style="left:242.60px;top:120.90px;width:1.00px;height:9.60px;background:#dce9f7"></div><div style="left:431.40px;top:120.90px;width:1.00px;height:9.60px;background:#dce9f7"></div><div style="left:620.40px;top:120.90px;width:1.00px;height:9.60px;background:#dce9f7"></div><div style="left:808.90px;top:120.90px;width:1.00px;height:9.60px;background:#dce9f7"></div><div style="left:824.00px;top:120.90px;width:1.00px;height:9.60px;background:#dce9f7"></div><div class="t" style="left:1.60px;top:122.11px;font-size:7.500px;color:#1a1a1a;font-weight:normal;font-family:'Liberation Sans', sans-serif;transform:scaleX(0.8333);transform-origin:0 0;">Andrea Schaefer</div><div class="t" style="left:190.90px;top:122.11px;font-size:7.500px;color:#1a1a1a;font-weight:normal;font-family:'Liberation Sans', sans-serif;transform:scaleX(0.8333);transform-origin:0 0;">1001126</div><div style="left:812.30px;top:122.10px;width:7.80px;height:7.50px;border:1px solid #8a8a8a;border-radius:1.2px;background:#ffffff"></div><div style="left:828.90px;top:122.10px;width:7.80px;height:7.50px;border:1px solid #8a8a8a;border-radius:1.2px;background:#ffffff"></div><div style="left:0.00px;top:130.20px;width:842.50px;height:9.60px;background:#ffffff"></div><div style="left:188.80px;top:130.20px;width:1.00px;height:9.60px;background:#dce9f7"></div><div style="left:242.60px;top:130.20px;width:1.00px;height:9.60px;background:#dce9f7"></div><div style="left:431.40px;top:130.20px;width:1.00px;height:9.60px;background:#dce9f7"></div><div style="left:620.40px;top:130.20px;width:1.00px;height:9.60px;background:#dce9f7"></div><div style="left:808.90px;top:130.20px;width:1.00px;height:9.60px;background:#dce9f7"></div><div style="left:824.00px;top:130.20px;width:1.00px;height:9.60px;background:#dce9f7"></div><div class="t" style="left:1.60px;top:131.41px;font-size:7.500px;color:#1a1a1a;font-weight:normal;font-family:'Liberation Sans', sans-serif;transform:scaleX(0.8333);transform-origin:0 0;">Andries Zalea</div><div class="t" style="left:190.90px;top:131.41px;font-size:7.500px;color:#1a1a1a;font-weight:normal;font-family:'Liberation Sans', sans-serif;transform:scaleX(0.8333);transform-origin:0 0;">1001108</div><div style="left:812.30px;top:131.40px;width:7.80px;height:7.50px;border:1px solid #8a8a8a;border-radius:1.2px;background:#ffffff"></div><div style="left:828.90px;top:131.40px;width:7.80px;height:7.50px;border:1px solid #8a8a8a;border-radius:1.2px;background:#ffffff"></div><div style="left:0.00px;top:139.50px;width:842.50px;height:9.60px;background:#eaf3fd"></div><div style="left:188.80px;top:139.50px;width:1.00px;height:9.60px;background:#dce9f7"></div><div style="left:242.60px;top:139.50px;width:1.00px;height:9.60px;background:#dce9f7"></div><div style="left:431.40px;top:139.50px;width:1.00px;height:9.60px;background:#dce9f7"></div><div style="left:620.40px;top:139.50px;width:1.00px;height:9.60px;background:#dce9f7"></div><div style="left:808.90px;top:139.50px;width:1.00px;height:9.60px;background:#dce9f7"></div><div style="left:824.00px;top:139.50px;width:1.00px;height:9.60px;background:#dce9f7"></div><div class="t" style="left:1.60px;top:140.71px;font-size:7.500px;color:#1a1a1a;font-weight:normal;font-family:'Liberation Sans', sans-serif;transform:scaleX(0.8333);transform-origin:0 0;">Angela van Kersenbergen</div><div class="t" style="left:190.90px;top:140.71px;font-size:7.500px;color:#1a1a1a;font-weight:normal;font-family:'Liberation Sans', sans-serif;transform:scaleX(0.8333);transform-origin:0 0;">1000993</div><div style="left:812.30px;top:140.70px;width:7.80px;height:7.50px;border:1px solid #8a8a8a;border-radius:1.2px;background:#ffffff"></div><div style="left:828.90px;top:140.70px;width:7.80px;height:7.50px;border:1px solid #8a8a8a;border-radius:1.2px;background:#ffffff"></div><div style="left:0.00px;top:148.80px;width:842.50px;height:9.60px;background:#ffffff"></div><div style="left:188.80px;top:148.80px;width:1.00px;height:9.60px;background:#dce9f7"></div><div style="left:242.60px;top:148.80px;width:1.00px;height:9.60px;background:#dce9f7"></div><div style="left:431.40px;top:148.80px;width:1.00px;height:9.60px;background:#dce9f7"></div><div style="left:620.40px;top:148.80px;width:1.00px;height:9.60px;background:#dce9f7"></div><div style="left:808.90px;top:148.80px;width:1.00px;height:9.60px;background:#dce9f7"></div><div style="left:824.00px;top:148.80px;width:1.00px;height:9.60px;background:#dce9f7"></div><div class="t" style="left:1.60px;top:150.01px;font-size:7.500px;color:#1a1a1a;font-weight:normal;font-family:'Liberation Sans', sans-serif;transform:scaleX(0.8333);transform-origin:0 0;">Anja Verweij - Doornbos</div><div class="t" style="left:190.90px;top:150.01px;font-size:7.500px;color:#1a1a1a;font-weight:normal;font-family:'Liberation Sans', sans-serif;transform:scaleX(0.8333);transform-origin:0 0;">1000525</div><div style="left:812.30px;top:150.00px;width:7.80px;height:7.50px;border:1px solid #8a8a8a;border-radius:1.2px;background:#ffffff"></div><div style="left:828.90px;top:150.00px;width:7.80px;height:7.50px;border:1px solid #8a8a8a;border-radius:1.2px;background:#ffffff"></div><svg style="position:absolute;left:830.20px;top:151.30px" width="5.4" height="4.8" viewBox="0 0 5.4 4.8"><path d="M0.5 2.4L2 4L5 0.5" stroke="#1a1a1a" stroke-width="1.1" fill="none"/></svg><div style="left:0.00px;top:158.10px;width:842.50px;height:9.60px;background:#eaf3fd"></div><div style="left:188.80px;top:158.10px;width:1.00px;height:9.60px;background:#dce9f7"></div><div style="left:242.60px;top:158.10px;width:1.00px;height:9.60px;background:#dce9f7"></div><div style="left:431.40px;top:158.10px;width:1.00px;height:9.60px;background:#dce9f7"></div><div style="left:620.40px;top:158.10px;width:1.00px;height:9.60px;background:#dce9f7"></div><div style="left:808.90px;top:158.10px;width:1.00px;height:9.60px;background:#dce9f7"></div><div style="left:824.00px;top:158.10px;width:1.00px;height:9.60px;background:#dce9f7"></div><div class="t" style="left:1.60px;top:159.31px;font-size:7.500px;color:#1a1a1a;font-weight:normal;font-family:'Liberation Sans', sans-serif;transform:scaleX(0.8333);transform-origin:0 0;">Anna Strauch - Rauber</div><div class="t" style="left:190.90px;top:159.31px;font-size:7.500px;color:#1a1a1a;font-weight:normal;font-family:'Liberation Sans', sans-serif;transform:scaleX(0.8333);transform-origin:0 0;">1001182</div><div style="left:812.30px;top:159.30px;width:7.80px;height:7.50px;border:1px solid #8a8a8a;border-radius:1.2px;background:#ffffff"></div><div style="left:828.90px;top:159.30px;width:7.80px;height:7.50px;border:1px solid #8a8a8a;border-radius:1.2px;background:#ffffff"></div><div style="left:0.00px;top:167.40px;width:842.50px;height:9.60px;background:#ffffff"></div><div style="left:188.80px;top:167.40px;width:1.00px;height:9.60px;background:#dce9f7"></div><div style="left:242.60px;top:167.40px;width:1.00px;height:9.60px;background:#dce9f7"></div><div style="left:431.40px;top:167.40px;width:1.00px;height:9.60px;background:#dce9f7"></div><div style="left:620.40px;top:167.40px;width:1.00px;height:9.60px;background:#dce9f7"></div><div style="left:808.90px;top:167.40px;width:1.00px;height:9.60px;background:#dce9f7"></div><div style="left:824.00px;top:167.40px;width:1.00px;height:9.60px;background:#dce9f7"></div><div class="t" style="left:1.60px;top:168.61px;font-size:7.500px;color:#1a1a1a;font-weight:normal;font-family:'Liberation Sans', sans-serif;transform:scaleX(0.8333);transform-origin:0 0;">Annefrida Sorenson</div><div class="t" style="left:190.90px;top:168.61px;font-size:7.500px;color:#1a1a1a;font-weight:normal;font-family:'Liberation Sans', sans-serif;transform:scaleX(0.8333);transform-origin:0 0;">1001142</div><div style="left:812.30px;top:168.60px;width:7.80px;height:7.50px;border:1px solid #8a8a8a;border-radius:1.2px;background:#ffffff"></div><div style="left:828.90px;top:168.60px;width:7.80px;height:7.50px;border:1px solid #8a8a8a;border-radius:1.2px;background:#ffffff"></div><div style="left:0.00px;top:176.70px;width:842.50px;height:9.60px;background:#eaf3fd"></div><div style="left:188.80px;top:176.70px;width:1.00px;height:9.60px;background:#dce9f7"></div><div style="left:242.60px;top:176.70px;width:1.00px;height:9.60px;background:#dce9f7"></div><div style="left:431.40px;top:176.70px;width:1.00px;height:9.60px;background:#dce9f7"></div><div style="left:620.40px;top:176.70px;width:1.00px;height:9.60px;background:#dce9f7"></div><div style="left:808.90px;top:176.70px;width:1.00px;height:9.60px;background:#dce9f7"></div><div style="left:824.00px;top:176.70px;width:1.00px;height:9.60px;background:#dce9f7"></div><div class="t" style="left:1.60px;top:177.91px;font-size:7.500px;color:#1a1a1a;font-weight:normal;font-family:'Liberation Sans', sans-serif;transform:scaleX(0.8333);transform-origin:0 0;">Annelies Aandeweg</div><div class="t" style="left:190.90px;top:177.91px;font-size:7.500px;color:#1a1a1a;font-weight:normal;font-family:'Liberation Sans', sans-serif;transform:scaleX(0.8333);transform-origin:0 0;">1001193</div><div style="left:812.30px;top:177.90px;width:7.80px;height:7.50px;border:1px solid #8a8a8a;border-radius:1.2px;background:#ffffff"></div><div style="left:828.90px;top:177.90px;width:7.80px;height:7.50px;border:1px solid #8a8a8a;border-radius:1.2px;background:#ffffff"></div><div style="left:0.00px;top:186.00px;width:842.50px;height:9.60px;background:#ffffff"></div><div style="left:188.80px;top:186.00px;width:1.00px;height:9.60px;background:#dce9f7"></div><div style="left:242.60px;top:186.00px;width:1.00px;height:9.60px;background:#dce9f7"></div><div style="left:431.40px;top:186.00px;width:1.00px;height:9.60px;background:#dce9f7"></div><div style="left:620.40px;top:186.00px;width:1.00px;height:9.60px;background:#dce9f7"></div><div style="left:808.90px;top:186.00px;width:1.00px;height:9.60px;background:#dce9f7"></div><div style="left:824.00px;top:186.00px;width:1.00px;height:9.60px;background:#dce9f7"></div><div class="t" style="left:1.60px;top:187.21px;font-size:7.500px;color:#1a1a1a;font-weight:normal;font-family:'Liberation Sans', sans-serif;transform:scaleX(0.8333);transform-origin:0 0;">Annemieke van de Wiel - Rijder</div><div class="t" style="left:190.90px;top:187.21px;font-size:7.500px;color:#1a1a1a;font-weight:normal;font-family:'Liberation Sans', sans-serif;transform:scaleX(0.8333);transform-origin:0 0;">1001185</div><div style="left:812.30px;top:187.20px;width:7.80px;height:7.50px;border:1px solid #8a8a8a;border-radius:1.2px;background:#ffffff"></div><div style="left:828.90px;top:187.20px;width:7.80px;height:7.50px;border:1px solid #8a8a8a;border-radius:1.2px;background:#ffffff"></div><div style="left:0.00px;top:195.30px;width:842.50px;height:9.60px;background:#eaf3fd"></div><div style="left:188.80px;top:195.30px;width:1.00px;height:9.60px;background:#dce9f7"></div><div style="left:242.60px;top:195.30px;width:1.00px;height:9.60px;background:#dce9f7"></div><div style="left:431.40px;top:195.30px;width:1.00px;height:9.60px;background:#dce9f7"></div><div style="left:620.40px;top:195.30px;width:1.00px;height:9.60px;background:#dce9f7"></div><div style="left:808.90px;top:195.30px;width:1.00px;height:9.60px;background:#dce9f7"></div><div style="left:824.00px;top:195.30px;width:1.00px;height:9.60px;background:#dce9f7"></div><div class="t" style="left:1.60px;top:196.51px;font-size:7.500px;color:#1a1a1a;font-weight:normal;font-family:'Liberation Sans', sans-serif;transform:scaleX(0.8333);transform-origin:0 0;">Annet Ramaker - van Kalken</div><div class="t" style="left:190.90px;top:196.51px;font-size:7.500px;color:#1a1a1a;font-weight:normal;font-family:'Liberation Sans', sans-serif;transform:scaleX(0.8333);transform-origin:0 0;">1000568</div><div style="left:812.30px;top:196.50px;width:7.80px;height:7.50px;border:1px solid #8a8a8a;border-radius:1.2px;background:#ffffff"></div><div style="left:828.90px;top:196.50px;width:7.80px;height:7.50px;border:1px solid #8a8a8a;border-radius:1.2px;background:#ffffff"></div><svg style="position:absolute;left:830.20px;top:197.80px" width="5.4" height="4.8" viewBox="0 0 5.4 4.8"><path d="M0.5 2.4L2 4L5 0.5" stroke="#1a1a1a" stroke-width="1.1" fill="none"/></svg><div style="left:0.00px;top:204.60px;width:842.50px;height:9.60px;background:#ffffff"></div><div style="left:188.80px;top:204.60px;width:1.00px;height:9.60px;background:#dce9f7"></div><div style="left:242.60px;top:204.60px;width:1.00px;height:9.60px;background:#dce9f7"></div><div style="left:431.40px;top:204.60px;width:1.00px;height:9.60px;background:#dce9f7"></div><div style="left:620.40px;top:204.60px;width:1.00px;height:9.60px;background:#dce9f7"></div><div style="left:808.90px;top:204.60px;width:1.00px;height:9.60px;background:#dce9f7"></div><div style="left:824.00px;top:204.60px;width:1.00px;height:9.60px;background:#dce9f7"></div><div class="t" style="left:1.60px;top:205.81px;font-size:7.500px;color:#1a1a1a;font-weight:normal;font-family:'Liberation Sans', sans-serif;transform:scaleX(0.8333);transform-origin:0 0;">Anthonie Ligtevoet</div><div class="t" style="left:190.90px;top:205.81px;font-size:7.500px;color:#1a1a1a;font-weight:normal;font-family:'Liberation Sans', sans-serif;transform:scaleX(0.8333);transform-origin:0 0;">1000097</div><div style="left:812.30px;top:205.80px;width:7.80px;height:7.50px;border:1px solid #8a8a8a;border-radius:1.2px;background:#ffffff"></div><div style="left:828.90px;top:205.80px;width:7.80px;height:7.50px;border:1px solid #8a8a8a;border-radius:1.2px;background:#ffffff"></div><div style="left:0.00px;top:213.90px;width:842.50px;height:9.60px;background:#eaf3fd"></div><div style="left:188.80px;top:213.90px;width:1.00px;height:9.60px;background:#dce9f7"></div><div style="left:242.60px;top:213.90px;width:1.00px;height:9.60px;background:#dce9f7"></div><div style="left:431.40px;top:213.90px;width:1.00px;height:9.60px;background:#dce9f7"></div><div style="left:620.40px;top:213.90px;width:1.00px;height:9.60px;background:#dce9f7"></div><div style="left:808.90px;top:213.90px;width:1.00px;height:9.60px;background:#dce9f7"></div><div style="left:824.00px;top:213.90px;width:1.00px;height:9.60px;background:#dce9f7"></div><div class="t" style="left:1.60px;top:215.11px;font-size:7.500px;color:#1a1a1a;font-weight:normal;font-family:'Liberation Sans', sans-serif;transform:scaleX(0.8333);transform-origin:0 0;">Anthony Stuart</div><div class="t" style="left:190.90px;top:215.11px;font-size:7.500px;color:#1a1a1a;font-weight:normal;font-family:'Liberation Sans', sans-serif;transform:scaleX(0.8333);transform-origin:0 0;">1001135</div><div style="left:812.30px;top:215.10px;width:7.80px;height:7.50px;border:1px solid #8a8a8a;border-radius:1.2px;background:#ffffff"></div><div style="left:828.90px;top:215.10px;width:7.80px;height:7.50px;border:1px solid #8a8a8a;border-radius:1.2px;background:#ffffff"></div><div style="left:0.00px;top:223.20px;width:842.50px;height:9.60px;background:#ffffff"></div><div style="left:188.80px;top:223.20px;width:1.00px;height:9.60px;background:#dce9f7"></div><div style="left:242.60px;top:223.20px;width:1.00px;height:9.60px;background:#dce9f7"></div><div style="left:431.40px;top:223.20px;width:1.00px;height:9.60px;background:#dce9f7"></div><div style="left:620.40px;top:223.20px;width:1.00px;height:9.60px;background:#dce9f7"></div><div style="left:808.90px;top:223.20px;width:1.00px;height:9.60px;background:#dce9f7"></div><div style="left:824.00px;top:223.20px;width:1.00px;height:9.60px;background:#dce9f7"></div><div class="t" style="left:1.60px;top:224.41px;font-size:7.500px;color:#1a1a1a;font-weight:normal;font-family:'Liberation Sans', sans-serif;transform:scaleX(0.8333);transform-origin:0 0;">Anton Arnold</div><div class="t" style="left:190.90px;top:224.41px;font-size:7.500px;color:#1a1a1a;font-weight:normal;font-family:'Liberation Sans', sans-serif;transform:scaleX(0.8333);transform-origin:0 0;">1000948</div><div style="left:812.30px;top:224.40px;width:7.80px;height:7.50px;border:1px solid #8a8a8a;border-radius:1.2px;background:#ffffff"></div><div style="left:828.90px;top:224.40px;width:7.80px;height:7.50px;border:1px solid #8a8a8a;border-radius:1.2px;background:#ffffff"></div><div style="left:0.00px;top:232.50px;width:842.50px;height:9.60px;background:#eaf3fd"></div><div style="left:188.80px;top:232.50px;width:1.00px;height:9.60px;background:#dce9f7"></div><div style="left:242.60px;top:232.50px;width:1.00px;height:9.60px;background:#dce9f7"></div><div style="left:431.40px;top:232.50px;width:1.00px;height:9.60px;background:#dce9f7"></div><div style="left:620.40px;top:232.50px;width:1.00px;height:9.60px;background:#dce9f7"></div><div style="left:808.90px;top:232.50px;width:1.00px;height:9.60px;background:#dce9f7"></div><div style="left:824.00px;top:232.50px;width:1.00px;height:9.60px;background:#dce9f7"></div><div class="t" style="left:1.60px;top:233.71px;font-size:7.500px;color:#1a1a1a;font-weight:normal;font-family:'Liberation Sans', sans-serif;transform:scaleX(0.8333);transform-origin:0 0;">Antonia de Vries - Sleur</div><div class="t" style="left:190.90px;top:233.71px;font-size:7.500px;color:#1a1a1a;font-weight:normal;font-family:'Liberation Sans', sans-serif;transform:scaleX(0.8333);transform-origin:0 0;">1000536</div><div style="left:812.30px;top:233.70px;width:7.80px;height:7.50px;border:1px solid #8a8a8a;border-radius:1.2px;background:#ffffff"></div><div style="left:828.90px;top:233.70px;width:7.80px;height:7.50px;border:1px solid #8a8a8a;border-radius:1.2px;background:#ffffff"></div><svg style="position:absolute;left:830.20px;top:235.00px" width="5.4" height="4.8" viewBox="0 0 5.4 4.8"><path d="M0.5 2.4L2 4L5 0.5" stroke="#1a1a1a" stroke-width="1.1" fill="none"/></svg><div style="left:0.00px;top:241.80px;width:842.50px;height:9.60px;background:#ffffff"></div><div style="left:188.80px;top:241.80px;width:1.00px;height:9.60px;background:#dce9f7"></div><div style="left:242.60px;top:241.80px;width:1.00px;height:9.60px;background:#dce9f7"></div><div style="left:431.40px;top:241.80px;width:1.00px;height:9.60px;background:#dce9f7"></div><div style="left:620.40px;top:241.80px;width:1.00px;height:9.60px;background:#dce9f7"></div><div style="left:808.90px;top:241.80px;width:1.00px;height:9.60px;background:#dce9f7"></div><div style="left:824.00px;top:241.80px;width:1.00px;height:9.60px;background:#dce9f7"></div><div class="t" style="left:1.60px;top:243.01px;font-size:7.500px;color:#1a1a1a;font-weight:normal;font-family:'Liberation Sans', sans-serif;transform:scaleX(0.8333);transform-origin:0 0;">Arend te Beest</div><div class="t" style="left:190.90px;top:243.01px;font-size:7.500px;color:#1a1a1a;font-weight:normal;font-family:'Liberation Sans', sans-serif;transform:scaleX(0.8333);transform-origin:0 0;">1001059</div><div style="left:812.30px;top:243.00px;width:7.80px;height:7.50px;border:1px solid #8a8a8a;border-radius:1.2px;background:#ffffff"></div><div style="left:828.90px;top:243.00px;width:7.80px;height:7.50px;border:1px solid #8a8a8a;border-radius:1.2px;background:#ffffff"></div><div style="left:0.00px;top:251.10px;width:842.50px;height:9.60px;background:#eaf3fd"></div><div style="left:188.80px;top:251.10px;width:1.00px;height:9.60px;background:#dce9f7"></div><div style="left:242.60px;top:251.10px;width:1.00px;height:9.60px;background:#dce9f7"></div><div style="left:431.40px;top:251.10px;width:1.00px;height:9.60px;background:#dce9f7"></div><div style="left:620.40px;top:251.10px;width:1.00px;height:9.60px;background:#dce9f7"></div><div style="left:808.90px;top:251.10px;width:1.00px;height:9.60px;background:#dce9f7"></div><div style="left:824.00px;top:251.10px;width:1.00px;height:9.60px;background:#dce9f7"></div><div class="t" style="left:1.60px;top:252.31px;font-size:7.500px;color:#1a1a1a;font-weight:normal;font-family:'Liberation Sans', sans-serif;transform:scaleX(0.8333);transform-origin:0 0;">Arend te Bogter</div><div class="t" style="left:190.90px;top:252.31px;font-size:7.500px;color:#1a1a1a;font-weight:normal;font-family:'Liberation Sans', sans-serif;transform:scaleX(0.8333);transform-origin:0 0;">1000559</div><div style="left:812.30px;top:252.30px;width:7.80px;height:7.50px;border:1px solid #8a8a8a;border-radius:1.2px;background:#ffffff"></div><div style="left:828.90px;top:252.30px;width:7.80px;height:7.50px;border:1px solid #8a8a8a;border-radius:1.2px;background:#ffffff"></div><svg style="position:absolute;left:830.20px;top:253.60px" width="5.4" height="4.8" viewBox="0 0 5.4 4.8"><path d="M0.5 2.4L2 4L5 0.5" stroke="#1a1a1a" stroke-width="1.1" fill="none"/></svg><div style="left:0.00px;top:260.40px;width:842.50px;height:9.60px;background:#ffffff"></div><div style="left:188.80px;top:260.40px;width:1.00px;height:9.60px;background:#dce9f7"></div><div style="left:242.60px;top:260.40px;width:1.00px;height:9.60px;background:#dce9f7"></div><div style="left:431.40px;top:260.40px;width:1.00px;height:9.60px;background:#dce9f7"></div><div style="left:620.40px;top:260.40px;width:1.00px;height:9.60px;background:#dce9f7"></div><div style="left:808.90px;top:260.40px;width:1.00px;height:9.60px;background:#dce9f7"></div><div style="left:824.00px;top:260.40px;width:1.00px;height:9.60px;background:#dce9f7"></div><div class="t" style="left:1.60px;top:261.61px;font-size:7.500px;color:#1a1a1a;font-weight:normal;font-family:'Liberation Sans', sans-serif;transform:scaleX(0.8333);transform-origin:0 0;">Arjan Prinsen</div><div class="t" style="left:190.90px;top:261.61px;font-size:7.500px;color:#1a1a1a;font-weight:normal;font-family:'Liberation Sans', sans-serif;transform:scaleX(0.8333);transform-origin:0 0;">1000204</div><div style="left:812.30px;top:261.60px;width:7.80px;height:7.50px;border:1px solid #8a8a8a;border-radius:1.2px;background:#ffffff"></div><div style="left:828.90px;top:261.60px;width:7.80px;height:7.50px;border:1px solid #8a8a8a;border-radius:1.2px;background:#ffffff"></div><div style="left:0.00px;top:269.70px;width:842.50px;height:9.60px;background:#eaf3fd"></div><div style="left:188.80px;top:269.70px;width:1.00px;height:9.60px;background:#dce9f7"></div><div style="left:242.60px;top:269.70px;width:1.00px;height:9.60px;background:#dce9f7"></div><div style="left:431.40px;top:269.70px;width:1.00px;height:9.60px;background:#dce9f7"></div><div style="left:620.40px;top:269.70px;width:1.00px;height:9.60px;background:#dce9f7"></div><div style="left:808.90px;top:269.70px;width:1.00px;height:9.60px;background:#dce9f7"></div><div style="left:824.00px;top:269.70px;width:1.00px;height:9.60px;background:#dce9f7"></div><div class="t" style="left:1.60px;top:270.91px;font-size:7.500px;color:#1a1a1a;font-weight:normal;font-family:'Liberation Sans', sans-serif;transform:scaleX(0.8333);transform-origin:0 0;">Arjan van Utrecht</div><div class="t" style="left:190.90px;top:270.91px;font-size:7.500px;color:#1a1a1a;font-weight:normal;font-family:'Liberation Sans', sans-serif;transform:scaleX(0.8333);transform-origin:0 0;">1000528</div><div style="left:812.30px;top:270.90px;width:7.80px;height:7.50px;border:1px solid #8a8a8a;border-radius:1.2px;background:#ffffff"></div><div style="left:828.90px;top:270.90px;width:7.80px;height:7.50px;border:1px solid #8a8a8a;border-radius:1.2px;background:#ffffff"></div><svg style="position:absolute;left:830.20px;top:272.20px" width="5.4" height="4.8" viewBox="0 0 5.4 4.8"><path d="M0.5 2.4L2 4L5 0.5" stroke="#1a1a1a" stroke-width="1.1" fill="none"/></svg><div style="left:0.00px;top:279.00px;width:842.50px;height:9.60px;background:#ffffff"></div><div style="left:188.80px;top:279.00px;width:1.00px;height:9.60px;background:#dce9f7"></div><div style="left:242.60px;top:279.00px;width:1.00px;height:9.60px;background:#dce9f7"></div><div style="left:431.40px;top:279.00px;width:1.00px;height:9.60px;background:#dce9f7"></div><div style="left:620.40px;top:279.00px;width:1.00px;height:9.60px;background:#dce9f7"></div><div style="left:808.90px;top:279.00px;width:1.00px;height:9.60px;background:#dce9f7"></div><div style="left:824.00px;top:279.00px;width:1.00px;height:9.60px;background:#dce9f7"></div><div class="t" style="left:1.60px;top:280.21px;font-size:7.500px;color:#1a1a1a;font-weight:normal;font-family:'Liberation Sans', sans-serif;transform:scaleX(0.8333);transform-origin:0 0;">Arjen van Harten</div><div class="t" style="left:190.90px;top:280.21px;font-size:7.500px;color:#1a1a1a;font-weight:normal;font-family:'Liberation Sans', sans-serif;transform:scaleX(0.8333);transform-origin:0 0;">1000539</div><div style="left:812.30px;top:280.20px;width:7.80px;height:7.50px;border:1px solid #8a8a8a;border-radius:1.2px;background:#ffffff"></div><div style="left:828.90px;top:280.20px;width:7.80px;height:7.50px;border:1px solid #8a8a8a;border-radius:1.2px;background:#ffffff"></div><div style="left:0.00px;top:288.30px;width:842.50px;height:9.60px;background:#eaf3fd"></div><div style="left:188.80px;top:288.30px;width:1.00px;height:9.60px;background:#dce9f7"></div><div style="left:242.60px;top:288.30px;width:1.00px;height:9.60px;background:#dce9f7"></div><div style="left:431.40px;top:288.30px;width:1.00px;height:9.60px;background:#dce9f7"></div><div style="left:620.40px;top:288.30px;width:1.00px;height:9.60px;background:#dce9f7"></div><div style="left:808.90px;top:288.30px;width:1.00px;height:9.60px;background:#dce9f7"></div><div style="left:824.00px;top:288.30px;width:1.00px;height:9.60px;background:#dce9f7"></div><div class="t" style="left:1.60px;top:289.51px;font-size:7.500px;color:#1a1a1a;font-weight:normal;font-family:'Liberation Sans', sans-serif;transform:scaleX(0.8333);transform-origin:0 0;">Arno Visser</div><div class="t" style="left:190.90px;top:289.51px;font-size:7.500px;color:#1a1a1a;font-weight:normal;font-family:'Liberation Sans', sans-serif;transform:scaleX(0.8333);transform-origin:0 0;">1000251</div><div style="left:812.30px;top:289.50px;width:7.80px;height:7.50px;border:1px solid #8a8a8a;border-radius:1.2px;background:#ffffff"></div><div style="left:828.90px;top:289.50px;width:7.80px;height:7.50px;border:1px solid #8a8a8a;border-radius:1.2px;background:#ffffff"></div><div style="left:0.00px;top:297.60px;width:842.50px;height:9.60px;background:#ffffff"></div><div style="left:188.80px;top:297.60px;width:1.00px;height:9.60px;background:#dce9f7"></div><div style="left:242.60px;top:297.60px;width:1.00px;height:9.60px;background:#dce9f7"></div><div style="left:431.40px;top:297.60px;width:1.00px;height:9.60px;background:#dce9f7"></div><div style="left:620.40px;top:297.60px;width:1.00px;height:9.60px;background:#dce9f7"></div><div style="left:808.90px;top:297.60px;width:1.00px;height:9.60px;background:#dce9f7"></div><div style="left:824.00px;top:297.60px;width:1.00px;height:9.60px;background:#dce9f7"></div><div class="t" style="left:1.60px;top:298.81px;font-size:7.500px;color:#1a1a1a;font-weight:normal;font-family:'Liberation Sans', sans-serif;transform:scaleX(0.8333);transform-origin:0 0;">Arnold Aandeweg</div><div class="t" style="left:190.90px;top:298.81px;font-size:7.500px;color:#1a1a1a;font-weight:normal;font-family:'Liberation Sans', sans-serif;transform:scaleX(0.8333);transform-origin:0 0;">1000996</div><div style="left:812.30px;top:298.80px;width:7.80px;height:7.50px;border:1px solid #8a8a8a;border-radius:1.2px;background:#ffffff"></div><div style="left:828.90px;top:298.80px;width:7.80px;height:7.50px;border:1px solid #8a8a8a;border-radius:1.2px;background:#ffffff"></div><svg style="position:absolute;left:830.20px;top:300.10px" width="5.4" height="4.8" viewBox="0 0 5.4 4.8"><path d="M0.5 2.4L2 4L5 0.5" stroke="#1a1a1a" stroke-width="1.1" fill="none"/></svg><div style="left:0.00px;top:306.90px;width:842.50px;height:9.60px;background:#eaf3fd"></div><div style="left:188.80px;top:306.90px;width:1.00px;height:9.60px;background:#dce9f7"></div><div style="left:242.60px;top:306.90px;width:1.00px;height:9.60px;background:#dce9f7"></div><div style="left:431.40px;top:306.90px;width:1.00px;height:9.60px;background:#dce9f7"></div><div style="left:620.40px;top:306.90px;width:1.00px;height:9.60px;background:#dce9f7"></div><div style="left:808.90px;top:306.90px;width:1.00px;height:9.60px;background:#dce9f7"></div><div style="left:824.00px;top:306.90px;width:1.00px;height:9.60px;background:#dce9f7"></div><div class="t" style="left:1.60px;top:308.11px;font-size:7.500px;color:#1a1a1a;font-weight:normal;font-family:'Liberation Sans', sans-serif;transform:scaleX(0.8333);transform-origin:0 0;">Arnoud Fontein</div><div class="t" style="left:190.90px;top:308.11px;font-size:7.500px;color:#1a1a1a;font-weight:normal;font-family:'Liberation Sans', sans-serif;transform:scaleX(0.8333);transform-origin:0 0;">1000543</div><div style="left:812.30px;top:308.10px;width:7.80px;height:7.50px;border:1px solid #8a8a8a;border-radius:1.2px;background:#ffffff"></div><div style="left:828.90px;top:308.10px;width:7.80px;height:7.50px;border:1px solid #8a8a8a;border-radius:1.2px;background:#ffffff"></div><svg style="position:absolute;left:830.20px;top:309.40px" width="5.4" height="4.8" viewBox="0 0 5.4 4.8"><path d="M0.5 2.4L2 4L5 0.5" stroke="#1a1a1a" stroke-width="1.1" fill="none"/></svg><div style="left:0.00px;top:316.20px;width:842.50px;height:9.60px;background:#ffffff"></div><div style="left:188.80px;top:316.20px;width:1.00px;height:9.60px;background:#dce9f7"></div><div style="left:242.60px;top:316.20px;width:1.00px;height:9.60px;background:#dce9f7"></div><div style="left:431.40px;top:316.20px;width:1.00px;height:9.60px;background:#dce9f7"></div><div style="left:620.40px;top:316.20px;width:1.00px;height:9.60px;background:#dce9f7"></div><div style="left:808.90px;top:316.20px;width:1.00px;height:9.60px;background:#dce9f7"></div><div style="left:824.00px;top:316.20px;width:1.00px;height:9.60px;background:#dce9f7"></div><div class="t" style="left:1.60px;top:317.41px;font-size:7.500px;color:#1a1a1a;font-weight:normal;font-family:'Liberation Sans', sans-serif;transform:scaleX(0.8333);transform-origin:0 0;">Aron van der Poel</div><div class="t" style="left:190.90px;top:317.41px;font-size:7.500px;color:#1a1a1a;font-weight:normal;font-family:'Liberation Sans', sans-serif;transform:scaleX(0.8333);transform-origin:0 0;">1000010</div><div style="left:812.30px;top:317.40px;width:7.80px;height:7.50px;border:1px solid #8a8a8a;border-radius:1.2px;background:#ffffff"></div><div style="left:828.90px;top:317.40px;width:7.80px;height:7.50px;border:1px solid #8a8a8a;border-radius:1.2px;background:#ffffff"></div><div style="left:0.00px;top:325.50px;width:842.50px;height:9.60px;background:#eaf3fd"></div><div style="left:188.80px;top:325.50px;width:1.00px;height:9.60px;background:#dce9f7"></div><div style="left:242.60px;top:325.50px;width:1.00px;height:9.60px;background:#dce9f7"></div><div style="left:431.40px;top:325.50px;width:1.00px;height:9.60px;background:#dce9f7"></div><div style="left:620.40px;top:325.50px;width:1.00px;height:9.60px;background:#dce9f7"></div><div style="left:808.90px;top:325.50px;width:1.00px;height:9.60px;background:#dce9f7"></div><div style="left:824.00px;top:325.50px;width:1.00px;height:9.60px;background:#dce9f7"></div><div class="t" style="left:1.60px;top:326.71px;font-size:7.500px;color:#1a1a1a;font-weight:normal;font-family:'Liberation Sans', sans-serif;transform:scaleX(0.8333);transform-origin:0 0;">Astrid Rietberg - van de Beek</div><div class="t" style="left:190.90px;top:326.71px;font-size:7.500px;color:#1a1a1a;font-weight:normal;font-family:'Liberation Sans', sans-serif;transform:scaleX(0.8333);transform-origin:0 0;">1000775</div><div style="left:812.30px;top:326.70px;width:7.80px;height:7.50px;border:1px solid #8a8a8a;border-radius:1.2px;background:#ffffff"></div><div style="left:828.90px;top:326.70px;width:7.80px;height:7.50px;border:1px solid #8a8a8a;border-radius:1.2px;background:#ffffff"></div><div style="left:0.00px;top:334.80px;width:842.50px;height:9.60px;background:#ffffff"></div><div style="left:188.80px;top:334.80px;width:1.00px;height:9.60px;background:#dce9f7"></div><div style="left:242.60px;top:334.80px;width:1.00px;height:9.60px;background:#dce9f7"></div><div style="left:431.40px;top:334.80px;width:1.00px;height:9.60px;background:#dce9f7"></div><div style="left:620.40px;top:334.80px;width:1.00px;height:9.60px;background:#dce9f7"></div><div style="left:808.90px;top:334.80px;width:1.00px;height:9.60px;background:#dce9f7"></div><div style="left:824.00px;top:334.80px;width:1.00px;height:9.60px;background:#dce9f7"></div><div class="t" style="left:1.60px;top:336.01px;font-size:7.500px;color:#1a1a1a;font-weight:normal;font-family:'Liberation Sans', sans-serif;transform:scaleX(0.8333);transform-origin:0 0;">Auke de Groot</div><div class="t" style="left:190.90px;top:336.01px;font-size:7.500px;color:#1a1a1a;font-weight:normal;font-family:'Liberation Sans', sans-serif;transform:scaleX(0.8333);transform-origin:0 0;">1000560</div><div style="left:812.30px;top:336.00px;width:7.80px;height:7.50px;border:1px solid #8a8a8a;border-radius:1.2px;background:#ffffff"></div><div style="left:828.90px;top:336.00px;width:7.80px;height:7.50px;border:1px solid #8a8a8a;border-radius:1.2px;background:#ffffff"></div><svg style="position:absolute;left:830.20px;top:337.30px" width="5.4" height="4.8" viewBox="0 0 5.4 4.8"><path d="M0.5 2.4L2 4L5 0.5" stroke="#1a1a1a" stroke-width="1.1" fill="none"/></svg><div style="left:0.00px;top:344.10px;width:842.50px;height:9.60px;background:#eaf3fd"></div><div style="left:188.80px;top:344.10px;width:1.00px;height:9.60px;background:#dce9f7"></div><div style="left:242.60px;top:344.10px;width:1.00px;height:9.60px;background:#dce9f7"></div><div style="left:431.40px;top:344.10px;width:1.00px;height:9.60px;background:#dce9f7"></div><div style="left:620.40px;top:344.10px;width:1.00px;height:9.60px;background:#dce9f7"></div><div style="left:808.90px;top:344.10px;width:1.00px;height:9.60px;background:#dce9f7"></div><div style="left:824.00px;top:344.10px;width:1.00px;height:9.60px;background:#dce9f7"></div><div class="t" style="left:1.60px;top:345.31px;font-size:7.500px;color:#1a1a1a;font-weight:normal;font-family:'Liberation Sans', sans-serif;transform:scaleX(0.8333);transform-origin:0 0;">Auke Engelen</div><div class="t" style="left:190.90px;top:345.31px;font-size:7.500px;color:#1a1a1a;font-weight:normal;font-family:'Liberation Sans', sans-serif;transform:scaleX(0.8333);transform-origin:0 0;">1000238</div><div style="left:812.30px;top:345.30px;width:7.80px;height:7.50px;border:1px solid #8a8a8a;border-radius:1.2px;background:#ffffff"></div><div style="left:828.90px;top:345.30px;width:7.80px;height:7.50px;border:1px solid #8a8a8a;border-radius:1.2px;background:#ffffff"></div><div style="left:0.00px;top:353.40px;width:842.50px;height:9.60px;background:#ffffff"></div><div style="left:188.80px;top:353.40px;width:1.00px;height:9.60px;background:#dce9f7"></div><div style="left:242.60px;top:353.40px;width:1.00px;height:9.60px;background:#dce9f7"></div><div style="left:431.40px;top:353.40px;width:1.00px;height:9.60px;background:#dce9f7"></div><div style="left:620.40px;top:353.40px;width:1.00px;height:9.60px;background:#dce9f7"></div><div style="left:808.90px;top:353.40px;width:1.00px;height:9.60px;background:#dce9f7"></div><div style="left:824.00px;top:353.40px;width:1.00px;height:9.60px;background:#dce9f7"></div><div class="t" style="left:1.60px;top:354.61px;font-size:7.500px;color:#1a1a1a;font-weight:normal;font-family:'Liberation Sans', sans-serif;transform:scaleX(0.8333);transform-origin:0 0;">Bardok</div><div class="t" style="left:190.90px;top:354.61px;font-size:7.500px;color:#1a1a1a;font-weight:normal;font-family:'Liberation Sans', sans-serif;transform:scaleX(0.8333);transform-origin:0 0;">1001247</div><div style="left:812.30px;top:354.60px;width:7.80px;height:7.50px;border:1px solid #8a8a8a;border-radius:1.2px;background:#ffffff"></div><div style="left:828.90px;top:354.60px;width:7.80px;height:7.50px;border:1px solid #8a8a8a;border-radius:1.2px;background:#ffffff"></div><div style="left:0.00px;top:362.70px;width:842.50px;height:9.60px;background:#eaf3fd"></div><div style="left:188.80px;top:362.70px;width:1.00px;height:9.60px;background:#dce9f7"></div><div style="left:242.60px;top:362.70px;width:1.00px;height:9.60px;background:#dce9f7"></div><div style="left:431.40px;top:362.70px;width:1.00px;height:9.60px;background:#dce9f7"></div><div style="left:620.40px;top:362.70px;width:1.00px;height:9.60px;background:#dce9f7"></div><div style="left:808.90px;top:362.70px;width:1.00px;height:9.60px;background:#dce9f7"></div><div style="left:824.00px;top:362.70px;width:1.00px;height:9.60px;background:#dce9f7"></div><div class="t" style="left:1.60px;top:363.91px;font-size:7.500px;color:#1a1a1a;font-weight:normal;font-family:'Liberation Sans', sans-serif;transform:scaleX(0.8333);transform-origin:0 0;">Barendse</div><div class="t" style="left:190.90px;top:363.91px;font-size:7.500px;color:#1a1a1a;font-weight:normal;font-family:'Liberation Sans', sans-serif;transform:scaleX(0.8333);transform-origin:0 0;">1001243</div><div style="left:812.30px;top:363.90px;width:7.80px;height:7.50px;border:1px solid #8a8a8a;border-radius:1.2px;background:#ffffff"></div><div style="left:828.90px;top:363.90px;width:7.80px;height:7.50px;border:1px solid #8a8a8a;border-radius:1.2px;background:#ffffff"></div><div style="left:0.00px;top:372.00px;width:842.50px;height:9.60px;background:#ffffff"></div><div style="left:188.80px;top:372.00px;width:1.00px;height:9.60px;background:#dce9f7"></div><div style="left:242.60px;top:372.00px;width:1.00px;height:9.60px;background:#dce9f7"></div><div style="left:431.40px;top:372.00px;width:1.00px;height:9.60px;background:#dce9f7"></div><div style="left:620.40px;top:372.00px;width:1.00px;height:9.60px;background:#dce9f7"></div><div style="left:808.90px;top:372.00px;width:1.00px;height:9.60px;background:#dce9f7"></div><div style="left:824.00px;top:372.00px;width:1.00px;height:9.60px;background:#dce9f7"></div><div class="t" style="left:1.60px;top:373.21px;font-size:7.500px;color:#1a1a1a;font-weight:normal;font-family:'Liberation Sans', sans-serif;transform:scaleX(0.8333);transform-origin:0 0;">Barry van der Sloot</div><div class="t" style="left:190.90px;top:373.21px;font-size:7.500px;color:#1a1a1a;font-weight:normal;font-family:'Liberation Sans', sans-serif;transform:scaleX(0.8333);transform-origin:0 0;">1000444</div><div style="left:812.30px;top:373.20px;width:7.80px;height:7.50px;border:1px solid #8a8a8a;border-radius:1.2px;background:#ffffff"></div><div style="left:828.90px;top:373.20px;width:7.80px;height:7.50px;border:1px solid #8a8a8a;border-radius:1.2px;background:#ffffff"></div><div style="left:0.00px;top:381.30px;width:842.50px;height:9.60px;background:#eaf3fd"></div><div style="left:188.80px;top:381.30px;width:1.00px;height:9.60px;background:#dce9f7"></div><div style="left:242.60px;top:381.30px;width:1.00px;height:9.60px;background:#dce9f7"></div><div style="left:431.40px;top:381.30px;width:1.00px;height:9.60px;background:#dce9f7"></div><div style="left:620.40px;top:381.30px;width:1.00px;height:9.60px;background:#dce9f7"></div><div style="left:808.90px;top:381.30px;width:1.00px;height:9.60px;background:#dce9f7"></div><div style="left:824.00px;top:381.30px;width:1.00px;height:9.60px;background:#dce9f7"></div><div class="t" style="left:1.60px;top:382.51px;font-size:7.500px;color:#1a1a1a;font-weight:normal;font-family:'Liberation Sans', sans-serif;transform:scaleX(0.8333);transform-origin:0 0;">Bart de Baron</div><div class="t" style="left:190.90px;top:382.51px;font-size:7.500px;color:#1a1a1a;font-weight:normal;font-family:'Liberation Sans', sans-serif;transform:scaleX(0.8333);transform-origin:0 0;">1000994</div><div style="left:812.30px;top:382.50px;width:7.80px;height:7.50px;border:1px solid #8a8a8a;border-radius:1.2px;background:#ffffff"></div><div style="left:828.90px;top:382.50px;width:7.80px;height:7.50px;border:1px solid #8a8a8a;border-radius:1.2px;background:#ffffff"></div><div style="left:0.00px;top:390.60px;width:842.50px;height:9.60px;background:#ffffff"></div><div style="left:188.80px;top:390.60px;width:1.00px;height:9.60px;background:#dce9f7"></div><div style="left:242.60px;top:390.60px;width:1.00px;height:9.60px;background:#dce9f7"></div><div style="left:431.40px;top:390.60px;width:1.00px;height:9.60px;background:#dce9f7"></div><div style="left:620.40px;top:390.60px;width:1.00px;height:9.60px;background:#dce9f7"></div><div style="left:808.90px;top:390.60px;width:1.00px;height:9.60px;background:#dce9f7"></div><div style="left:824.00px;top:390.60px;width:1.00px;height:9.60px;background:#dce9f7"></div><div class="t" style="left:1.60px;top:391.81px;font-size:7.500px;color:#1a1a1a;font-weight:normal;font-family:'Liberation Sans', sans-serif;transform:scaleX(0.8333);transform-origin:0 0;">Bart de Vries</div><div class="t" style="left:190.90px;top:391.81px;font-size:7.500px;color:#1a1a1a;font-weight:normal;font-family:'Liberation Sans', sans-serif;transform:scaleX(0.8333);transform-origin:0 0;">1000693</div><div style="left:812.30px;top:391.80px;width:7.80px;height:7.50px;border:1px solid #8a8a8a;border-radius:1.2px;background:#ffffff"></div><div style="left:828.90px;top:391.80px;width:7.80px;height:7.50px;border:1px solid #8a8a8a;border-radius:1.2px;background:#ffffff"></div><div style="left:0.00px;top:399.90px;width:842.50px;height:9.60px;background:#eaf3fd"></div><div style="left:188.80px;top:399.90px;width:1.00px;height:9.60px;background:#dce9f7"></div><div style="left:242.60px;top:399.90px;width:1.00px;height:9.60px;background:#dce9f7"></div><div style="left:431.40px;top:399.90px;width:1.00px;height:9.60px;background:#dce9f7"></div><div style="left:620.40px;top:399.90px;width:1.00px;height:9.60px;background:#dce9f7"></div><div style="left:808.90px;top:399.90px;width:1.00px;height:9.60px;background:#dce9f7"></div><div style="left:824.00px;top:399.90px;width:1.00px;height:9.60px;background:#dce9f7"></div><div class="t" style="left:1.60px;top:401.11px;font-size:7.500px;color:#1a1a1a;font-weight:normal;font-family:'Liberation Sans', sans-serif;transform:scaleX(0.8333);transform-origin:0 0;">Bart Korps</div><div class="t" style="left:190.90px;top:401.11px;font-size:7.500px;color:#1a1a1a;font-weight:normal;font-family:'Liberation Sans', sans-serif;transform:scaleX(0.8333);transform-origin:0 0;">1000437</div><div class="t" style="left:622.40px;top:401.11px;font-size:7.500px;color:#1a1a1a;font-weight:normal;font-family:'Liberation Sans', sans-serif;transform:scaleX(0.8333);transform-origin:0 0;">Bilderdijklaan 9, 5611 NG  EINDHOVEN</div><div style="left:812.30px;top:401.10px;width:7.80px;height:7.50px;border:1px solid #8a8a8a;border-radius:1.2px;background:#ffffff"></div><div style="left:828.90px;top:401.10px;width:7.80px;height:7.50px;border:1px solid #8a8a8a;border-radius:1.2px;background:#ffffff"></div><div style="left:0.00px;top:409.20px;width:842.50px;height:9.60px;background:#ffffff"></div><div style="left:188.80px;top:409.20px;width:1.00px;height:9.60px;background:#dce9f7"></div><div style="left:242.60px;top:409.20px;width:1.00px;height:9.60px;background:#dce9f7"></div><div style="left:431.40px;top:409.20px;width:1.00px;height:9.60px;background:#dce9f7"></div><div style="left:620.40px;top:409.20px;width:1.00px;height:9.60px;background:#dce9f7"></div><div style="left:808.90px;top:409.20px;width:1.00px;height:9.60px;background:#dce9f7"></div><div style="left:824.00px;top:409.20px;width:1.00px;height:9.60px;background:#dce9f7"></div><div class="t" style="left:1.60px;top:410.41px;font-size:7.500px;color:#1a1a1a;font-weight:normal;font-family:'Liberation Sans', sans-serif;transform:scaleX(0.8333);transform-origin:0 0;">Bart van den Dongen</div><div class="t" style="left:190.90px;top:410.41px;font-size:7.500px;color:#1a1a1a;font-weight:normal;font-family:'Liberation Sans', sans-serif;transform:scaleX(0.8333);transform-origin:0 0;">1000533</div><div class="t" style="left:622.40px;top:410.41px;font-size:7.500px;color:#1a1a1a;font-weight:normal;font-family:'Liberation Sans', sans-serif;transform:scaleX(0.8333);transform-origin:0 0;">Schuttersweg 31, 3860 AL  NIJKERK GLD</div><div style="left:812.30px;top:410.40px;width:7.80px;height:7.50px;border:1px solid #8a8a8a;border-radius:1.2px;background:#ffffff"></div><div style="left:828.90px;top:410.40px;width:7.80px;height:7.50px;border:1px solid #8a8a8a;border-radius:1.2px;background:#ffffff"></div><svg style="position:absolute;left:830.20px;top:411.70px" width="5.4" height="4.8" viewBox="0 0 5.4 4.8"><path d="M0.5 2.4L2 4L5 0.5" stroke="#1a1a1a" stroke-width="1.1" fill="none"/></svg><div style="left:0.00px;top:418.50px;width:842.50px;height:9.60px;background:#eaf3fd"></div><div style="left:188.80px;top:418.50px;width:1.00px;height:9.60px;background:#dce9f7"></div><div style="left:242.60px;top:418.50px;width:1.00px;height:9.60px;background:#dce9f7"></div><div style="left:431.40px;top:418.50px;width:1.00px;height:9.60px;background:#dce9f7"></div><div style="left:620.40px;top:418.50px;width:1.00px;height:9.60px;background:#dce9f7"></div><div style="left:808.90px;top:418.50px;width:1.00px;height:9.60px;background:#dce9f7"></div><div style="left:824.00px;top:418.50px;width:1.00px;height:9.60px;background:#dce9f7"></div><div class="t" style="left:1.60px;top:419.71px;font-size:7.500px;color:#1a1a1a;font-weight:normal;font-family:'Liberation Sans', sans-serif;transform:scaleX(0.8333);transform-origin:0 0;">Bas Kei</div><div class="t" style="left:190.90px;top:419.71px;font-size:7.500px;color:#1a1a1a;font-weight:normal;font-family:'Liberation Sans', sans-serif;transform:scaleX(0.8333);transform-origin:0 0;">1001161</div><div style="left:812.30px;top:419.70px;width:7.80px;height:7.50px;border:1px solid #8a8a8a;border-radius:1.2px;background:#ffffff"></div><div style="left:828.90px;top:419.70px;width:7.80px;height:7.50px;border:1px solid #8a8a8a;border-radius:1.2px;background:#ffffff"></div><div style="left:0.00px;top:427.80px;width:842.50px;height:9.60px;background:#ffffff"></div><div style="left:188.80px;top:427.80px;width:1.00px;height:9.60px;background:#dce9f7"></div><div style="left:242.60px;top:427.80px;width:1.00px;height:9.60px;background:#dce9f7"></div><div style="left:431.40px;top:427.80px;width:1.00px;height:9.60px;background:#dce9f7"></div><div style="left:620.40px;top:427.80px;width:1.00px;height:9.60px;background:#dce9f7"></div><div style="left:808.90px;top:427.80px;width:1.00px;height:9.60px;background:#dce9f7"></div><div style="left:824.00px;top:427.80px;width:1.00px;height:9.60px;background:#dce9f7"></div><div class="t" style="left:1.60px;top:429.01px;font-size:7.500px;color:#1a1a1a;font-weight:normal;font-family:'Liberation Sans', sans-serif;transform:scaleX(0.8333);transform-origin:0 0;">Bas Sneijders</div><div class="t" style="left:190.90px;top:429.01px;font-size:7.500px;color:#1a1a1a;font-weight:normal;font-family:'Liberation Sans', sans-serif;transform:scaleX(0.8333);transform-origin:0 0;">1000208</div><div class="t" style="left:622.40px;top:429.01px;font-size:7.500px;color:#1a1a1a;font-weight:normal;font-family:'Liberation Sans', sans-serif;transform:scaleX(0.8333);transform-origin:0 0;">Handelsweg 4, 4231 EZ  MEERKERK</div><div style="left:812.30px;top:429.00px;width:7.80px;height:7.50px;border:1px solid #8a8a8a;border-radius:1.2px;background:#ffffff"></div><div style="left:828.90px;top:429.00px;width:7.80px;height:7.50px;border:1px solid #8a8a8a;border-radius:1.2px;background:#ffffff"></div><div style="left:0.00px;top:437.10px;width:842.50px;height:9.60px;background:#eaf3fd"></div><div style="left:188.80px;top:437.10px;width:1.00px;height:9.60px;background:#dce9f7"></div><div style="left:242.60px;top:437.10px;width:1.00px;height:9.60px;background:#dce9f7"></div><div style="left:431.40px;top:437.10px;width:1.00px;height:9.60px;background:#dce9f7"></div><div style="left:620.40px;top:437.10px;width:1.00px;height:9.60px;background:#dce9f7"></div><div style="left:808.90px;top:437.10px;width:1.00px;height:9.60px;background:#dce9f7"></div><div style="left:824.00px;top:437.10px;width:1.00px;height:9.60px;background:#dce9f7"></div><div class="t" style="left:1.60px;top:438.31px;font-size:7.500px;color:#1a1a1a;font-weight:normal;font-family:'Liberation Sans', sans-serif;transform:scaleX(0.8333);transform-origin:0 0;">Bastiaan van de Velde</div><div class="t" style="left:190.90px;top:438.31px;font-size:7.500px;color:#1a1a1a;font-weight:normal;font-family:'Liberation Sans', sans-serif;transform:scaleX(0.8333);transform-origin:0 0;">1000512</div><div class="t" style="left:622.40px;top:438.31px;font-size:7.500px;color:#1a1a1a;font-weight:normal;font-family:'Liberation Sans', sans-serif;transform:scaleX(0.8333);transform-origin:0 0;">Hoevelakenweg 4, 3831 RD  LEUSDEN</div><div class="t" style="left:244.40px;top:438.45px;font-size:7.254px;color:#1a1a1a;font-weight:normal;font-family:'Liberation Sans', sans-serif;transform:scaleX(0.8547);transform-origin:0 0;">033-4441234</div><div class="t" style="left:433.50px;top:438.45px;font-size:7.254px;color:#1a1a1a;font-weight:normal;font-family:'Liberation Sans', sans-serif;transform:scaleX(0.8547);transform-origin:0 0;">info@vandevelden.info</div><div style="left:812.30px;top:438.30px;width:7.80px;height:7.50px;border:1px solid #8a8a8a;border-radius:1.2px;background:#ffffff"></div><div style="left:828.90px;top:438.30px;width:7.80px;height:7.50px;border:1px solid #8a8a8a;border-radius:1.2px;background:#ffffff"></div><svg style="position:absolute;left:830.20px;top:439.60px" width="5.4" height="4.8" viewBox="0 0 5.4 4.8"><path d="M0.5 2.4L2 4L5 0.5" stroke="#1a1a1a" stroke-width="1.1" fill="none"/></svg></div><div class="t" style="right:119.50px;top:246.65px;font-size:7.440px;color:#1a1a1a;font-weight:normal;font-family:'Liberation Sans', sans-serif;transform:scaleX(0.8333);transform-origin:100% 0;">Piet Heinstraat 8, 3811 AB  AMERSFOORT</div><div class="t" style="right:122.50px;top:274.55px;font-size:7.440px;color:#1a1a1a;font-weight:normal;font-family:'Liberation Sans', sans-serif;transform:scaleX(0.8333);transform-origin:100% 0;">Markt 12, 3431 LB  NIEUWEGEIN-ZUID  PUTTEN NT</div><div class="t" style="right:99.60px;top:404.75px;font-size:7.440px;color:#1a1a1a;font-weight:normal;font-family:'Liberation Sans', sans-serif;transform:scaleX(0.8333);transform-origin:100% 0;">Hoofdweg 17, 9674 AB   TERBERG</div><div class="t" style="right:126.00px;top:441.95px;font-size:7.440px;color:#1a1a1a;font-weight:normal;font-family:'Liberation Sans', sans-serif;transform:scaleX(0.8333);transform-origin:100% 0;">Steenweg 2, 4181 AJ  TIEL T</div><div class="t" style="right:86.30px;top:451.25px;font-size:7.440px;color:#1a1a1a;font-weight:normal;font-family:'Liberation Sans', sans-serif;transform:scaleX(0.8333);transform-origin:100% 0;">Kerklaan 19, 2841 XV  NIEUWERKERK AD IJSSEL</div><div class="t" style="right:124.20px;top:516.35px;font-size:7.440px;color:#1a1a1a;font-weight:normal;font-family:'Liberation Sans', sans-serif;transform:scaleX(0.8333);transform-origin:100% 0;">Zuidwal 3, 5911 AP  ZUIDPOORT</div><div class="t" style="right:96.00px;top:534.95px;font-size:7.440px;color:#1a1a1a;font-weight:normal;font-family:'Liberation Sans', sans-serif;transform:scaleX(0.8333);transform-origin:100% 0;">Oudegracht 12, 3511 AP    UTRECHT</div><div style="left:347.40px;top:237.10px;width:522.60px;height:324.90px;background:#a8c0de;border:1px solid #5a6470"></div><div style="left:352.00px;top:254.80px;width:513.00px;height:303.80px;background:#f0f0f0"></div><div style="left:353.00px;top:244.50px;width:8.60px;height:6.50px;background:#f4f6f8;border:1px solid #8a9ab0"></div><div style="left:354.20px;top:246.00px;width:3.30px;height:3.80px;background:#5f80b0"></div><div class="t" style="left:551.00px;top:243.95px;font-size:8.530px;color:#222222;font-weight:normal;font-family:'Liberation Sans', sans-serif;">Eigenschappen persoon</div><div style="left:830.20px;top:243.00px;width:10.10px;height:10.60px;background:#9fb6d4;border:1px solid #8ca3c2"></div><div style="left:832.80px;top:248.30px;width:5.00px;height:1.60px;background:#111111"></div><div style="left:842.40px;top:243.00px;width:9.60px;height:10.60px;background:#9fb6d4;border:1px solid #8ca3c2"></div><div style="left:844.60px;top:245.40px;width:5.20px;height:4.60px;border:1.2px solid #111111;border-top:2px solid #111111"></div><div style="left:854.00px;top:243.00px;width:10.00px;height:10.60px;background:#d9534a"></div><div class="t" style="left:856.00px;top:244.59px;font-size:7.000px;color:#111111;font-weight:bold;font-family:'Liberation Sans', sans-serif;">✕</div><div class="t" style="left:364.00px;top:266.80px;font-size:7.150px;color:#1a1a1a;font-weight:bold;font-family:'Liberation Sans', sans-serif;">Beek, A. van der (Adrie) (1000081)</div><div style="left:828.20px;top:263.00px;width:13.60px;height:13.70px;background:#ffffff;border:1px solid #6f9fe0;border-radius:1px"></div><div style="left:845.20px;top:263.00px;width:13.60px;height:13.70px;background:#ffffff;border:1px solid #6f9fe0;border-radius:1px"></div><svg style="position:absolute;left:833.5px;top:267.5px" width="3" height="4.6" viewBox="0 0 3 4.6"><path d="M3 0V4.6L0 2.3Z" fill="#3a7fd6"/></svg><svg style="position:absolute;left:850.7px;top:267.5px" width="3" height="4.6" viewBox="0 0 3 4.6"><path d="M0 0V4.6L3 2.3Z" fill="#3a7fd6"/></svg><div style="left:357.00px;top:284.00px;width:78.00px;height:169.00px;background:#ffffff"></div><div style="left:357.00px;top:283.80px;width:78.00px;height:12.50px;background:#4a87d8"></div><div class="t" style="left:359.00px;top:286.47px;font-size:6.850px;color:#ffffff;font-weight:bold;font-family:'Liberation Sans', sans-serif;">Tabbladen</div><div style="left:425.30px;top:289.40px;width:1.60px;height:1.60px;background:#ffffff"></div><div style="left:428.20px;top:289.40px;width:1.60px;height:1.60px;background:#ffffff"></div><div style="left:431.10px;top:289.40px;width:1.60px;height:1.60px;background:#ffffff"></div><div style="left:357.00px;top:296.30px;width:78.00px;height:11.60px;background:#e6e6e6"></div><div style="left:357px;top:284px;width:78px;height:169px;overflow:hidden"><div class="t" style="left:3.40px;top:15.17px;font-size:6.840px;color:#111111;font-weight:bold;font-family:'Liberation Sans', sans-serif;">Algemeen</div><div class="t" style="left:2.90px;top:26.58px;font-size:7.196px;color:#1a1a1a;font-weight:normal;font-family:'Liberation Sans', sans-serif;transform:scaleX(0.8547);transform-origin:0 0;">Persoon</div><div class="t" style="left:2.90px;top:38.18px;font-size:7.196px;color:#1a1a1a;font-weight:normal;font-family:'Liberation Sans', sans-serif;transform:scaleX(0.8547);transform-origin:0 0;">Overige</div><div class="t" style="left:2.90px;top:49.78px;font-size:7.196px;color:#1a1a1a;font-weight:normal;font-family:'Liberation Sans', sans-serif;transform:scaleX(0.8547);transform-origin:0 0;">Foto</div><div class="t" style="left:2.90px;top:61.38px;font-size:7.196px;color:#1a1a1a;font-weight:normal;font-family:'Liberation Sans', sans-serif;transform:scaleX(0.8547);transform-origin:0 0;">Adreshistorie</div><div class="t" style="left:2.90px;top:72.98px;font-size:7.196px;color:#1a1a1a;font-weight:normal;font-family:'Liberation Sans', sans-serif;transform:scaleX(0.8547);transform-origin:0 0;">Verbanden</div><div class="t" style="left:2.90px;top:84.58px;font-size:7.196px;color:#1a1a1a;font-weight:normal;font-family:'Liberation Sans', sans-serif;transform:scaleX(0.8547);transform-origin:0 0;">Communicatie</div><div class="t" style="left:2.90px;top:96.18px;font-size:7.196px;color:#1a1a1a;font-weight:normal;font-family:'Liberation Sans', sans-serif;transform:scaleX(0.8547);transform-origin:0 0;">Bankrekening</div><div class="t" style="left:2.90px;top:107.78px;font-size:7.196px;color:#1a1a1a;font-weight:normal;font-family:'Liberation Sans', sans-serif;transform:scaleX(0.8547);transform-origin:0 0;">Contacten</div><div class="t" style="left:2.90px;top:119.38px;font-size:7.196px;color:#1a1a1a;font-weight:normal;font-family:'Liberation Sans', sans-serif;transform:scaleX(0.8547);transform-origin:0 0;">Koppelingen</div><div class="t" style="left:2.90px;top:130.98px;font-size:7.196px;color:#1a1a1a;font-weight:normal;font-family:'Liberation Sans', sans-serif;transform:scaleX(0.8547);transform-origin:0 0;">Dossier</div><div class="t" style="left:2.90px;top:142.58px;font-size:7.196px;color:#1a1a1a;font-weight:normal;font-family:'Liberation Sans', sans-serif;transform:scaleX(0.8547);transform-origin:0 0;">Cursusevenement</div><div class="t" style="left:2.90px;top:154.18px;font-size:7.196px;color:#1a1a1a;font-weight:normal;font-family:'Liberation Sans', sans-serif;transform:scaleX(0.8547);transform-origin:0 0;">Portal toegang</div><div class="t" style="left:2.90px;top:165.78px;font-size:7.196px;color:#1a1a1a;font-weight:normal;font-family:'Liberation Sans', sans-serif;transform:scaleX(0.8547);transform-origin:0 0;">Autorisatierollen</div></div><div style="left:435.60px;top:284.00px;width:8.90px;height:169.00px;background:#ffffff;border:1px solid #e6e6e6"></div><div style="left:435.60px;top:284.00px;width:8.90px;height:9.40px;background:#ffffff"></div><svg style="position:absolute;left:437.5px;top:287px" width="5" height="3" viewBox="0 0 5 3"><path d="M0.4 2.6L2.5 0.5L4.6 2.6" stroke="#555" stroke-width="0.8" fill="none"/></svg><div style="left:436.40px;top:293.40px;width:7.30px;height:111.50px;background:#dcdcdc"></div><div style="left:438.00px;top:347.80px;width:4.00px;height:0.70px;background:#7a7a7a"></div><div style="left:438.00px;top:349.20px;width:4.00px;height:0.70px;background:#7a7a7a"></div><div style="left:438.00px;top:350.60px;width:4.00px;height:0.70px;background:#7a7a7a"></div><div style="left:435.60px;top:442.00px;width:8.90px;height:11.00px;background:#ffffff;border:1px solid #e0e0e0"></div><svg style="position:absolute;left:437.5px;top:446px" width="5" height="3" viewBox="0 0 5 3"><path d="M0.4 0.4L2.5 2.5L4.6 0.4" stroke="#555" stroke-width="0.8" fill="none"/></svg><div style="left:357.00px;top:461.00px;width:87.80px;height:71.00px;background:#ffffff"></div><div style="left:357.00px;top:461.00px;width:87.80px;height:12.50px;background:#4a87d8"></div><div class="t" style="left:359.50px;top:464.47px;font-size:6.850px;color:#ffffff;font-weight:bold;font-family:'Liberation Sans', sans-serif;">Acties</div><div class="t" style="left:360.00px;top:475.98px;font-size:7.371px;color:#1a1a1a;font-weight:normal;font-family:'Liberation Sans', sans-serif;transform:scaleX(0.8547);transform-origin:0 0;">Dossieritem</div><div class="t" style="left:360.00px;top:487.68px;font-size:7.371px;color:#1a1a1a;font-weight:normal;font-family:'Liberation Sans', sans-serif;transform:scaleX(0.8547);transform-origin:0 0;">Afdrukken stamkaart</div><div class="t" style="left:360.00px;top:499.38px;font-size:7.371px;color:#1a1a1a;font-weight:normal;font-family:'Liberation Sans', sans-serif;transform:scaleX(0.8547);transform-origin:0 0;">Nieuwe afspraak</div><div class="t" style="left:360.00px;top:511.08px;font-size:7.371px;color:#1a1a1a;font-weight:normal;font-family:'Liberation Sans', sans-serif;transform:scaleX(0.8547);transform-origin:0 0;">E-mail toestemming</div><div class="t" style="left:360.00px;top:522.78px;font-size:7.371px;color:#1a1a1a;font-weight:normal;font-family:'Liberation Sans', sans-serif;transform:scaleX(0.8547);transform-origin:0 0;">Bericht portaltoegang</div><div style="left:452.00px;top:283.80px;width:407.00px;height:12.40px;background:#4a87d8"></div><div class="t" style="left:638.50px;top:286.27px;font-size:6.850px;color:#ffffff;font-weight:bold;font-family:'Liberation Sans', sans-serif;">Algemeen</div><div class="t" style="left:457.50px;top:296.47px;font-size:6.850px;color:#111111;font-weight:bold;font-family:'Liberation Sans', sans-serif;">Persoon</div><div class="t" style="left:458.80px;top:307.65px;font-size:7.254px;color:#1a1a1a;font-weight:normal;font-family:'Liberation Sans', sans-serif;transform:scaleX(0.8547);transform-origin:0 0;">Zoeknaam:</div><div class="t" style="left:458.80px;top:321.65px;font-size:7.254px;color:#1a1a1a;font-weight:normal;font-family:'Liberation Sans', sans-serif;transform:scaleX(0.8547);transform-origin:0 0;">Voorletters:</div><div class="t" style="left:458.80px;top:335.65px;font-size:7.254px;color:#1a1a1a;font-weight:normal;font-family:'Liberation Sans', sans-serif;transform:scaleX(0.8547);transform-origin:0 0;">Voorvoegsel:</div><div class="t" style="left:458.80px;top:349.65px;font-size:7.254px;color:#1a1a1a;font-weight:normal;font-family:'Liberation Sans', sans-serif;transform:scaleX(0.8547);transform-origin:0 0;">Roepnaam:</div><div class="t" style="left:458.80px;top:363.45px;font-size:7.254px;color:#1a1a1a;font-weight:normal;font-family:'Liberation Sans', sans-serif;transform:scaleX(0.8547);transform-origin:0 0;">Voorv. geb.naam:</div><div class="t" style="left:458.80px;top:377.45px;font-size:7.254px;color:#1a1a1a;font-weight:normal;font-family:'Liberation Sans', sans-serif;transform:scaleX(0.8547);transform-origin:0 0;">Voorvoegsel partner:</div><div class="t" style="left:458.80px;top:391.25px;font-size:7.254px;color:#1a1a1a;font-weight:normal;font-family:'Liberation Sans', sans-serif;transform:scaleX(0.8547);transform-origin:0 0;">Naamgebruik:</div><div style="left:538.00px;top:306.00px;width:94.40px;height:11.60px;background:#ffffff;border:1px solid #a9a9a9"></div><div class="t" style="left:539.80px;top:307.85px;font-size:7.254px;color:#1a1a1a;font-weight:normal;font-family:'Liberation Sans', sans-serif;transform:scaleX(0.8547);transform-origin:0 0;">beek</div><div style="left:538.00px;top:320.20px;width:94.40px;height:11.20px;background:#ffffff;border:1px solid #4a86d8"></div><div style="left:539.80px;top:322.30px;width:5.30px;height:7.20px;background:#3d7ad6"></div><div class="t" style="left:540.10px;top:321.95px;font-size:7.254px;color:#ffffff;font-weight:normal;font-family:'Liberation Sans', sans-serif;transform:scaleX(0.8547);transform-origin:0 0;">A</div><div style="left:538.00px;top:334.00px;width:94.40px;height:11.20px;background:#ffffff;border:1px solid #a9a9a9"></div><div class="t" style="left:539.80px;top:335.65px;font-size:7.254px;color:#1a1a1a;font-weight:normal;font-family:'Liberation Sans', sans-serif;transform:scaleX(0.8547);transform-origin:0 0;">van der</div><div style="left:538.00px;top:348.00px;width:94.40px;height:11.20px;background:#ffffff;border:1px solid #a9a9a9"></div><div class="t" style="left:539.80px;top:349.65px;font-size:7.254px;color:#1a1a1a;font-weight:normal;font-family:'Liberation Sans', sans-serif;transform:scaleX(0.8547);transform-origin:0 0;">Adrie</div><div style="left:538.00px;top:361.80px;width:94.40px;height:11.70px;background:#e3e3e3;border:1px solid #9a9a9a"></div><div style="left:538.00px;top:376.00px;width:94.40px;height:11.50px;background:#e3e3e3;border:1px solid #9a9a9a"></div><div style="left:538.10px;top:389.60px;width:39.50px;height:11.70px;background:#e3e3e3;border:1px solid #9a9a9a"></div><div style="left:578.50px;top:389.60px;width:10.50px;height:11.70px;background:#dedede;border:1px solid #a8a8a8;border-radius:1px"></div><div style="left:581.15px;top:397.70px;width:1.00px;height:1.00px;background:#555555"></div><div style="left:583.25px;top:397.70px;width:1.00px;height:1.00px;background:#555555"></div><div style="left:585.35px;top:397.70px;width:1.00px;height:1.00px;background:#555555"></div><div style="left:592.00px;top:389.60px;width:258.00px;height:11.70px;background:#e3e3e3"></div><div class="t" style="left:675.00px;top:307.45px;font-size:7.254px;color:#1a1a1a;font-weight:normal;font-family:'Liberation Sans', sans-serif;transform:scaleX(0.8547);transform-origin:0 0;">Geslacht:</div><div class="t" style="left:675.00px;top:321.65px;font-size:7.254px;color:#1a1a1a;font-weight:normal;font-family:'Liberation Sans', sans-serif;transform:scaleX(0.8547);transform-origin:0 0;">Voornaam:</div><div class="t" style="left:675.00px;top:335.65px;font-size:7.254px;color:#1a1a1a;font-weight:normal;font-family:'Liberation Sans', sans-serif;transform:scaleX(0.8547);transform-origin:0 0;">Achternaam:</div><div class="t" style="left:675.00px;top:363.45px;font-size:7.254px;color:#1a1a1a;font-weight:normal;font-family:'Liberation Sans', sans-serif;transform:scaleX(0.8547);transform-origin:0 0;">Geboortenaam:</div><div class="t" style="left:675.00px;top:377.45px;font-size:7.254px;color:#1a1a1a;font-weight:normal;font-family:'Liberation Sans', sans-serif;transform:scaleX(0.8547);transform-origin:0 0;">Geb.naam partner:</div><div style="left:754.50px;top:306.00px;width:39.50px;height:12.00px;background:#ffffff;border:1px solid #a9a9a9"></div><div class="t" style="left:756.30px;top:308.05px;font-size:7.254px;color:#1a1a1a;font-weight:normal;font-family:'Liberation Sans', sans-serif;transform:scaleX(0.8547);transform-origin:0 0;">X</div><div style="left:795.00px;top:306.00px;width:10.00px;height:12.00px;background:#dedede;border:1px solid #a8a8a8;border-radius:1px"></div><div style="left:797.40px;top:314.40px;width:1.00px;height:1.00px;background:#555555"></div><div style="left:799.50px;top:314.40px;width:1.00px;height:1.00px;background:#555555"></div><div style="left:801.60px;top:314.40px;width:1.00px;height:1.00px;background:#555555"></div><div style="left:807.00px;top:306.00px;width:41.60px;height:12.00px;background:#e3e3e3"></div><div class="t" style="left:809.50px;top:307.65px;font-size:7.254px;color:#1a1a1a;font-weight:normal;font-family:'Liberation Sans', sans-serif;transform:scaleX(0.8547);transform-origin:0 0;">Overig</div><div style="left:754.50px;top:320.50px;width:94.50px;height:11.50px;background:#ffffff;border:1px solid #a9a9a9"></div><div class="t" style="left:756.30px;top:322.30px;font-size:7.254px;color:#1a1a1a;font-weight:normal;font-family:'Liberation Sans', sans-serif;transform:scaleX(0.8547);transform-origin:0 0;">Adrie</div><div style="left:754.50px;top:334.50px;width:94.50px;height:11.10px;background:#ffffff;border:1px solid #a9a9a9"></div><div class="t" style="left:756.30px;top:336.10px;font-size:7.254px;color:#1a1a1a;font-weight:normal;font-family:'Liberation Sans', sans-serif;transform:scaleX(0.8547);transform-origin:0 0;">Beek</div><div style="left:675.60px;top:350.80px;width:7.20px;height:7.20px;background:#ffffff;border:1px solid #8a8a8a"></div><div class="t" style="left:684.90px;top:350.48px;font-size:7.184px;color:#1a1a1a;font-weight:normal;font-family:'Liberation Sans', sans-serif;transform:scaleX(0.8547);transform-origin:0 0;">Geboortenaam apart vastleggen</div><div style="left:754.50px;top:361.90px;width:94.50px;height:11.80px;background:#e3e3e3;border:1px solid #9a9a9a"></div><div style="left:754.50px;top:376.00px;width:94.50px;height:11.50px;background:#e3e3e3;border:1px solid #9a9a9a"></div><div style="left:538.00px;top:405.60px;width:7.60px;height:7.50px;background:#ffffff;border:1px solid #8a8a8a"></div><div class="t" style="left:547.70px;top:405.45px;font-size:7.254px;color:#1a1a1a;font-weight:normal;font-family:'Liberation Sans', sans-serif;transform:scaleX(0.8547);transform-origin:0 0;">Geblokkeerd</div><div class="t" style="left:457.90px;top:420.05px;font-size:6.700px;color:#111111;font-weight:bold;font-family:'Liberation Sans', sans-serif;">Communicatiegegevens</div><div style="left:536.00px;top:423.80px;width:319.00px;height:1.00px;background:#dfe6ee"></div><div class="t" style="left:459.00px;top:431.55px;font-size:7.254px;color:#1a1a1a;font-weight:normal;font-family:'Liberation Sans', sans-serif;transform:scaleX(0.8547);transform-origin:0 0;">Adres:</div><div style="left:538.00px;top:429.50px;width:301.00px;height:11.30px;background:#e3e3e3;border:1px solid #8d8d8d;border-top:1.5px solid #6d6d6d"></div><div class="t" style="left:539.60px;top:431.27px;font-size:7.207px;color:#1a1a1a;font-weight:normal;font-family:'Liberation Sans', sans-serif;transform:scaleX(0.8547);transform-origin:0 0;">Kruisweg 1121, 2131 CV HOOFDDORP</div><div style="left:839.50px;top:430.50px;width:8.80px;height:10.30px;background:#dedede;border:1px solid #a8a8a8;border-radius:1px"></div><div style="left:841.30px;top:437.20px;width:1.00px;height:1.00px;background:#555555"></div><div style="left:843.40px;top:437.20px;width:1.00px;height:1.00px;background:#555555"></div><div style="left:845.50px;top:437.20px;width:1.00px;height:1.00px;background:#555555"></div><div class="t" style="left:459.00px;top:444.75px;font-size:7.254px;color:#1a1a1a;font-weight:normal;font-family:'Liberation Sans', sans-serif;transform:scaleX(0.8547);transform-origin:0 0;">Telefoonnr. privé:</div><div class="t" style="left:459.00px;top:458.65px;font-size:7.254px;color:#1a1a1a;font-weight:normal;font-family:'Liberation Sans', sans-serif;transform:scaleX(0.8547);transform-origin:0 0;">Mobiel privé:</div><div style="left:538.00px;top:443.40px;width:85.00px;height:11.30px;background:#ffffff;border:1px solid #a9a9a9"></div><div style="left:538.00px;top:457.30px;width:85.00px;height:11.30px;background:#ffffff;border:1px solid #a9a9a9"></div><svg style="position:absolute;left:623.80px;top:444.80px" width="9" height="9" viewBox="0 0 9 9"><path d="M1.2 0.6C0.4 1.6 0.6 3.4 2.4 5.6C4.2 7.8 6.4 8.8 7.8 8.2L8.4 7.6L6.6 5.8L5.6 6.4C4.6 6 3.2 4.4 2.8 3.4L3.4 2.4L1.8 0.4Z" fill="#2f6fc4" stroke="#2f6fc4" stroke-width="0.7"/></svg><svg style="position:absolute;left:623.80px;top:458.70px" width="9" height="9" viewBox="0 0 9 9"><path d="M1.2 0.6C0.4 1.6 0.6 3.4 2.4 5.6C4.2 7.8 6.4 8.8 7.8 8.2L8.4 7.6L6.6 5.8L5.6 6.4C4.6 6 3.2 4.4 2.8 3.4L3.4 2.4L1.8 0.4Z" fill="#2f6fc4" stroke="#2f6fc4" stroke-width="0.7"/></svg><div class="t" style="left:675.00px;top:444.75px;font-size:7.254px;color:#1a1a1a;font-weight:normal;font-family:'Liberation Sans', sans-serif;transform:scaleX(0.8547);transform-origin:0 0;">E-mail privé:</div><div class="t" style="left:675.00px;top:458.65px;font-size:7.254px;color:#1a1a1a;font-weight:normal;font-family:'Liberation Sans', sans-serif;transform:scaleX(0.8547);transform-origin:0 0;">Website:</div><div style="left:754.50px;top:443.00px;width:84.50px;height:12.00px;background:#ffffff;border:1px solid #a9a9a9"></div><div style="left:754.50px;top:457.50px;width:84.50px;height:11.50px;background:#ffffff;border:1px solid #a9a9a9"></div><div style="left:840.20px;top:446.00px;width:9.00px;height:6.60px;background:#3f82d8"></div><svg style="position:absolute;left:840.2px;top:446px" width="9" height="6.6" viewBox="0 0 9 6.6"><path d="M0 0L4.5 3.6L9 0" stroke="#ffffff" stroke-width="0.9" fill="none"/></svg><svg style="position:absolute;left:839.8px;top:458.4px" width="9" height="9" viewBox="0 0 9 9"><circle cx="4.5" cy="4.5" r="4.3" fill="#3d86c9"/><path d="M2 2.5C3 2 4 3 3.6 4.2C3.2 5.4 4.6 6 4.4 7.6C3 7.4 1.6 6 1.4 4.6Z M5.4 1.4C6.8 1.8 7.8 3 7.8 4.4C7 4.2 6.2 3.4 5.2 2.6Z" fill="#6cae45"/></svg><div class="t" style="left:457.90px;top:475.43px;font-size:6.920px;color:#111111;font-weight:bold;font-family:'Liberation Sans', sans-serif;">Sociale netwerken</div><div style="left:520.00px;top:479.00px;width:335.00px;height:1.00px;background:#dfe6ee"></div><div class="t" style="left:459.00px;top:486.55px;font-size:7.254px;color:#1a1a1a;font-weight:normal;font-family:'Liberation Sans', sans-serif;transform:scaleX(0.8547);transform-origin:0 0;">Twitter:</div><div class="t" style="left:459.00px;top:500.25px;font-size:7.254px;color:#1a1a1a;font-weight:normal;font-family:'Liberation Sans', sans-serif;transform:scaleX(0.8547);transform-origin:0 0;">LinkedIn:</div><div style="left:538.00px;top:485.00px;width:85.00px;height:11.50px;background:#ffffff;border:1px solid #a9a9a9"></div><div style="left:538.00px;top:499.00px;width:85.00px;height:11.60px;background:#ffffff;border:1px solid #a9a9a9"></div><div style="left:623.80px;top:485.60px;width:9.00px;height:9.00px;background:#4a90d9;border-radius:1px"></div><svg style="position:absolute;left:624.6px;top:486.8px" width="7.4" height="6.4" viewBox="0 0 24 20"><path d="M24 2.4c-.9.4-1.8.6-2.8.8 1-.6 1.8-1.6 2.2-2.7-1 .6-2 1-3.1 1.2C19.3.6 18 0 16.6 0c-2.7 0-4.9 2.2-4.9 4.9 0 .4 0 .8.1 1.1C7.7 5.8 4.1 3.9 1.7.9c-.4.7-.7 1.6-.7 2.5 0 1.7.9 3.2 2.2 4.1-.8 0-1.6-.2-2.2-.6v.1c0 2.4 1.7 4.4 3.9 4.8-.4.1-.8.2-1.3.2-.3 0-.6 0-.9-.1.6 2 2.4 3.4 4.6 3.4-1.7 1.3-3.8 2.1-6.1 2.1-.4 0-.8 0-1.2-.1 2.2 1.4 4.8 2.2 7.5 2.2 9.1 0 14-7.5 14-14v-.6c1-.7 1.8-1.6 2.5-2.5z" fill="#ffffff"/></svg><div style="left:623.80px;top:499.60px;width:9.00px;height:9.00px;background:#2f5f9e"></div><div class="t" style="left:624.40px;top:500.46px;font-size:7.600px;color:#ffffff;font-weight:bold;font-family:'Liberation Sans', sans-serif;letter-spacing:-0.2px">in</div><div class="t" style="left:673.00px;top:486.55px;font-size:7.254px;color:#1a1a1a;font-weight:normal;font-family:'Liberation Sans', sans-serif;transform:scaleX(0.8547);transform-origin:0 0;">Facebook:</div><div style="left:752.00px;top:484.60px;width:84.70px;height:12.10px;background:#ffffff;border:1px solid #a9a9a9"></div><div style="left:837.80px;top:486.40px;width:8.90px;height:9.00px;background:#2f4f8a"></div><div class="t" style="left:840.30px;top:487.10px;font-size:9.000px;color:#ffffff;font-weight:bold;font-family:'Liberation Sans', sans-serif;">f</div><div style="left:754.00px;top:538.00px;width:50.00px;height:14.00px;background:#4a87d8"></div><div class="t" style="left:774.50px;top:541.18px;font-size:7.371px;color:#ffffff;font-weight:normal;font-family:'Liberation Sans', sans-serif;transform:scaleX(0.8547);transform-origin:0 0;text-decoration-thickness:0.6px"><u>O</u>K</div><div style="left:808.00px;top:538.00px;width:50.00px;height:14.00px;background:#ffffff"></div><div class="t" style="left:818.90px;top:541.18px;font-size:7.371px;color:#2f6fc4;font-weight:normal;font-family:'Liberation Sans', sans-serif;transform:scaleX(0.8547);transform-origin:0 0;text-decoration-thickness:0.6px"><u>A</u>nnuleren</div></body></html>
